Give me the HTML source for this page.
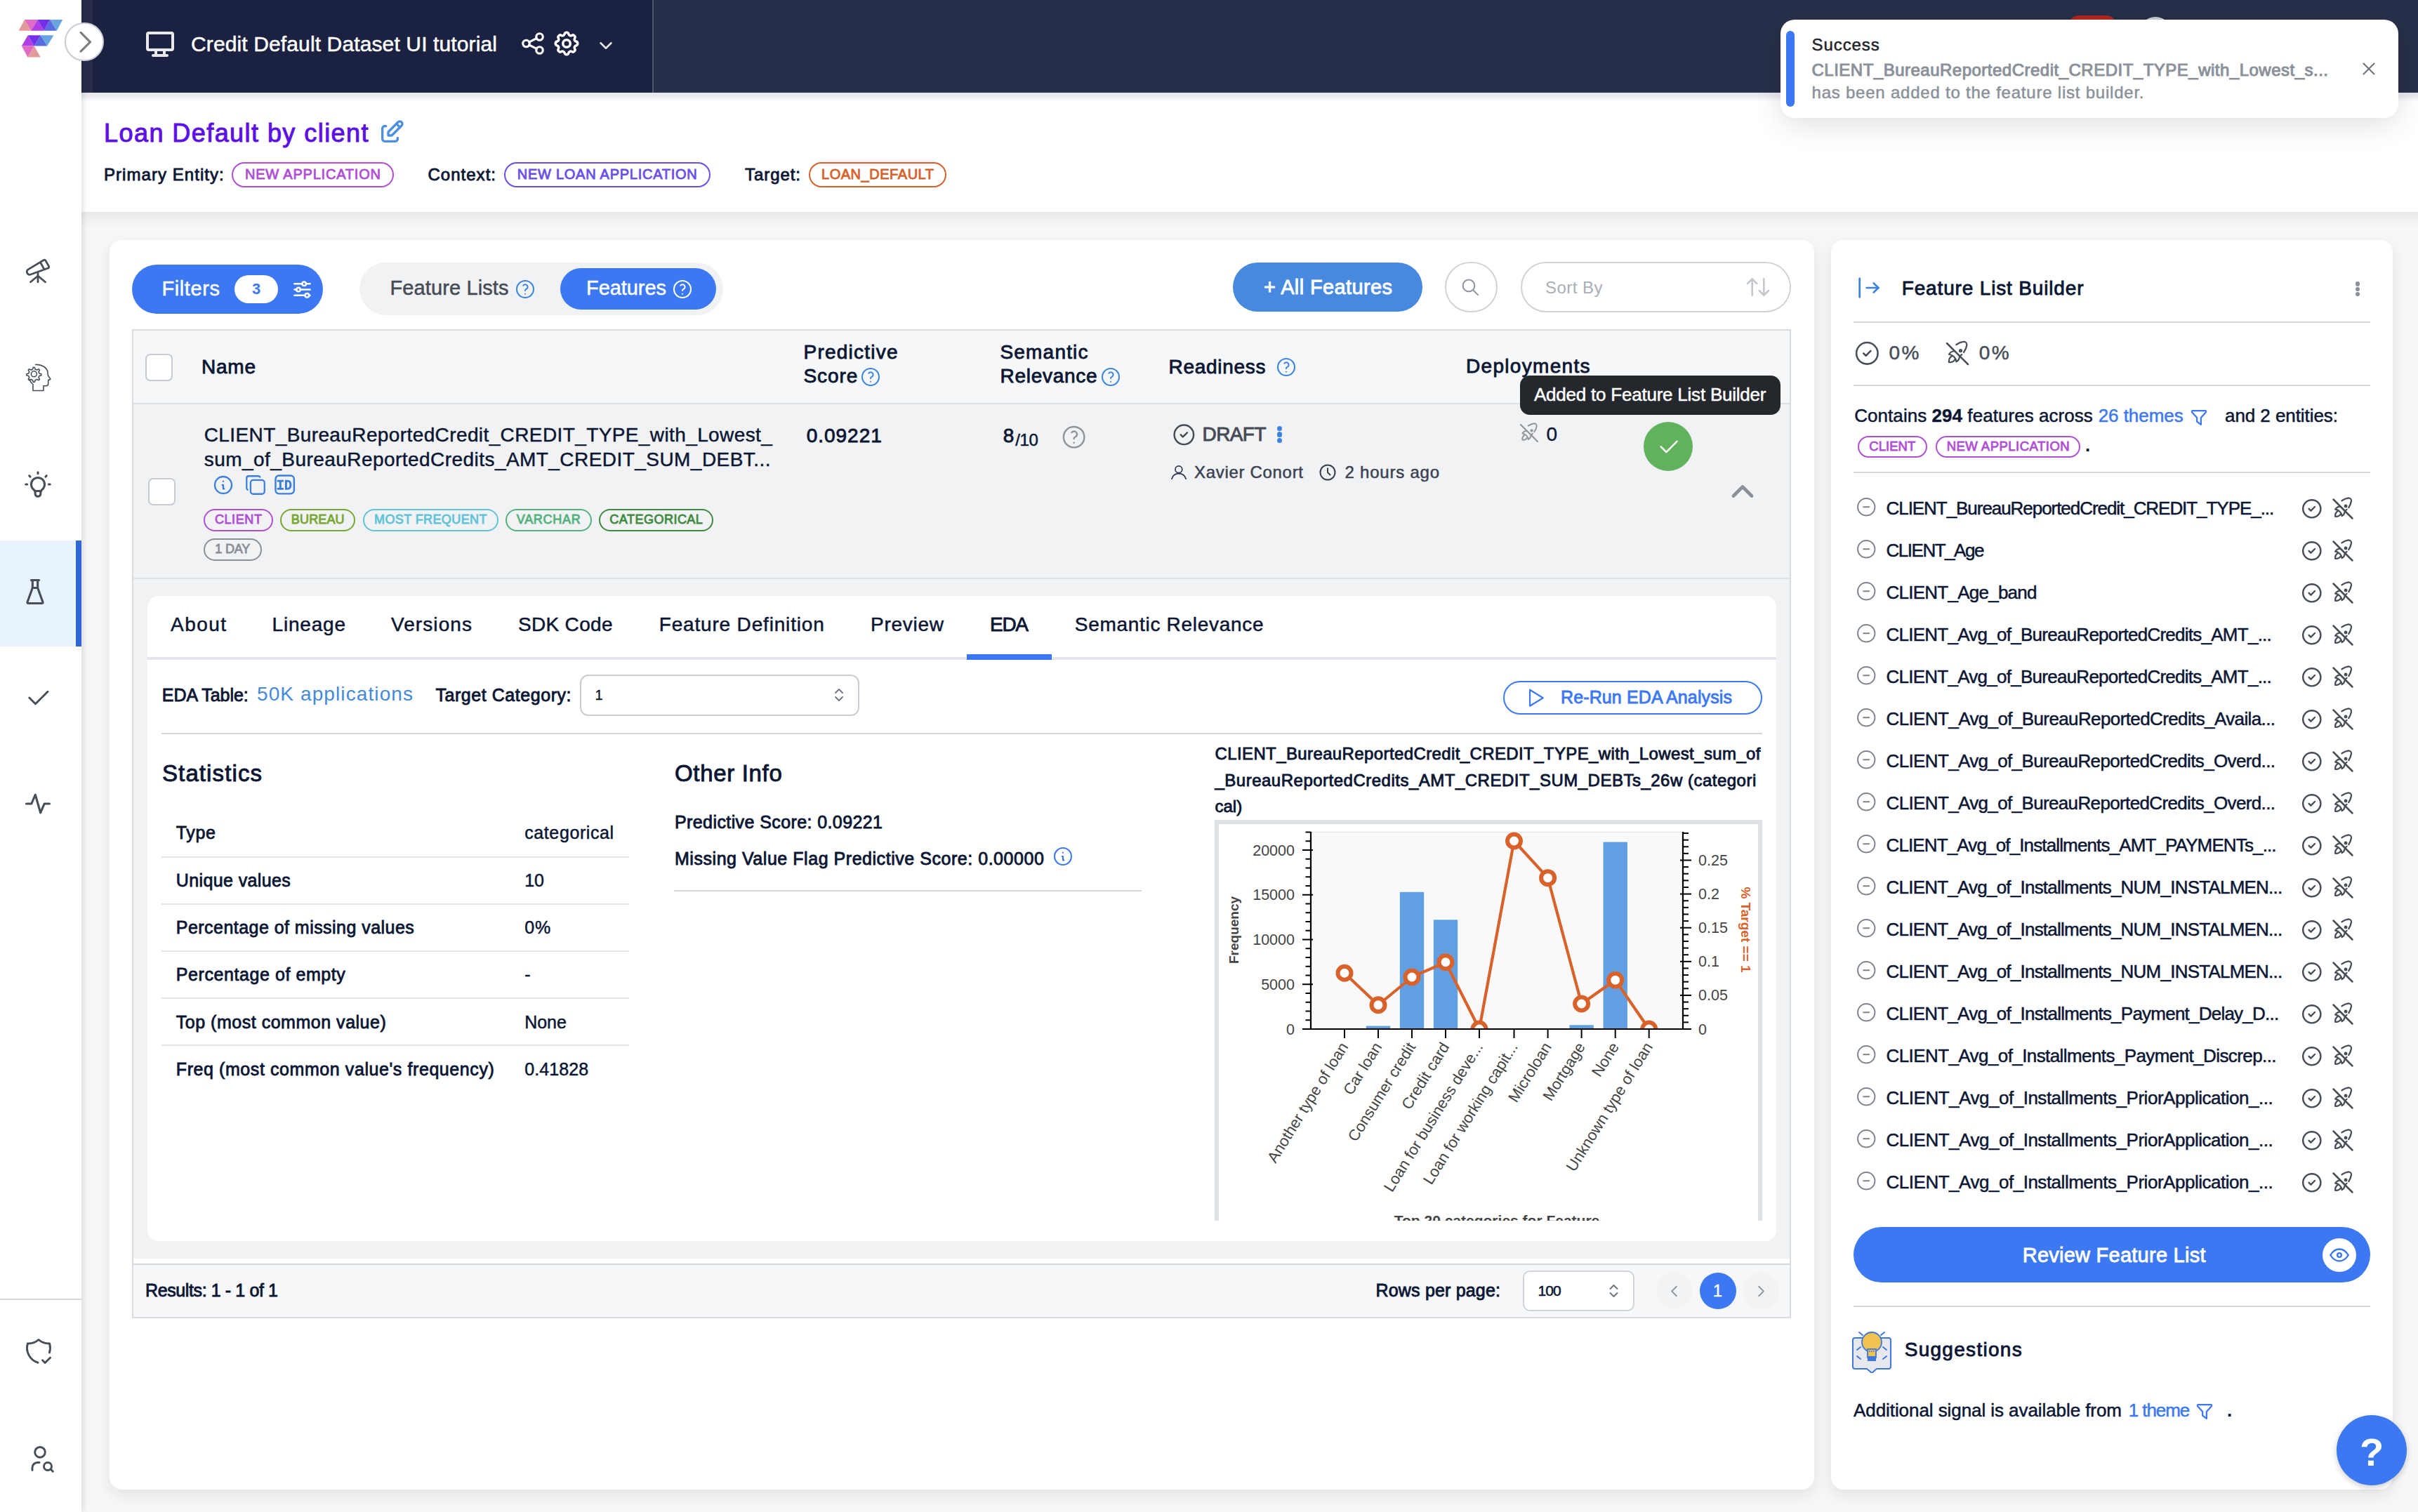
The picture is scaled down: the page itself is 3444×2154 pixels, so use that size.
<!DOCTYPE html><html><head><meta charset="utf-8"><style>
html,body{margin:0;padding:0;width:3444px;height:2154px;overflow:hidden;background:#f7f7f7;font-family:"Liberation Sans",sans-serif}
.t{position:absolute;white-space:nowrap;line-height:1}
.r{position:absolute;display:block}
.bd{box-sizing:border-box;text-align:center;font-weight:700;white-space:nowrap}
</style></head><body>
<div class="r" style="left:0px;top:0px;width:116px;height:2154px;background:#fff;z-index:5;box-shadow:2px 0 9px rgba(0,0,0,0.13)"></div>
<div class="r" style="left:116px;top:0px;width:3328px;height:132px;background:#282f4a"></div>
<div class="r" style="left:116px;top:0px;width:814px;height:132px;background:#1b2140"></div>
<div class="r" style="left:116px;top:0px;width:16px;height:132px;background:#272d48"></div>
<div class="r" style="left:929px;top:0px;width:2px;height:132px;background:#50566b"></div>
<svg class="r" style="left:0;top:0;z-index:6" width="100" height="90" viewBox="0 0 100 90">
<polygon points="26.5,43.8 35,28 44.1,43.8" fill="#e39a9a"/><polygon points="35,28 53.6,28 44.1,43.8" fill="#e06bc4"/><polygon points="44.1,43.8 53.6,28 62.6,43.8" fill="#b03fe3"/><polygon points="53.6,28 71.4,28 62.6,43.8" fill="#7430e6"/><polygon points="62.6,43.8 71.4,28 80.9,43.8" fill="#5a6ae0"/><polygon points="71.4,28 89.2,28 80.9,43.8" fill="#68a5e0"/>
<polygon points="30.9,65.6 39.7,50.3 48.7,65.6" fill="#b03fe3"/><polygon points="39.7,50.3 58,50.3 48.7,65.6" fill="#7430e6"/><polygon points="48.7,65.6 58,50.3 67.2,65.6" fill="#5a6ae0"/><polygon points="58,50.3 76.5,50.3 67.2,65.6" fill="#68a5e0"/>
<polygon points="30.9,65.6 48.7,65.6 39.4,81.6" fill="#e06bc4"/><polygon points="48.7,65.6 39.4,81.6 57.7,81.6" fill="#e39a9a"/>
</svg>
<div class="r" style="left:92.2px;top:31.9px;width:55.6px;height:55.6px;border-radius:50%;background:#fff;border:2px solid #c9ced5;z-index:7;box-sizing:border-box;box-shadow:0 1px 2px rgba(0,0,0,0.08)"></div>
<svg class="r" style="left:95.2px;top:33.099999999999994px;z-index:8" width="53.6" height="53.6" viewBox="0 0 24 24" fill="none" stroke="#7d7d7f" stroke-width="1.4" stroke-linecap="round" stroke-linejoin="round"><path d="M9 6l6 6l-6 6"/></svg>
<svg class="r" style="left:203.8px;top:38.8px;" width="48" height="48" viewBox="0 0 24 24" fill="none" stroke="#e9e9eb" stroke-width="2" stroke-linecap="round" stroke-linejoin="round"><path d="M3 5a1 1 0 0 1 1 -1h16a1 1 0 0 1 1 1v10a1 1 0 0 1 -1 1h-16a1 1 0 0 1 -1 -1v-10z"/><path d="M7 20h10"/><path d="M9 16v4"/><path d="M15 16v4"/></svg>
<div class="t " style="left:272px;top:47.60px;font-size:30px;font-weight:400;color:#ffffff;letter-spacing:0.125px;-webkit-text-stroke:0.5px currentColor;">Credit Default Dataset UI tutorial</div>
<svg class="r" style="left:740px;top:43px;" width="38" height="38" viewBox="0 0 24 24" fill="none" stroke="#ffffff" stroke-width="2" stroke-linecap="round" stroke-linejoin="round"><path d="M6 12m-3 0a3 3 0 1 0 6 0a3 3 0 1 0 -6 0"/><path d="M18 6m-3 0a3 3 0 1 0 6 0a3 3 0 1 0 -6 0"/><path d="M18 18m-3 0a3 3 0 1 0 6 0a3 3 0 1 0 -6 0"/><path d="M8.7 10.7l6.6 -3.4"/><path d="M8.7 13.3l6.6 3.4"/></svg>
<svg class="r" style="left:786px;top:41px;" width="42" height="42" viewBox="0 0 24 24" fill="none" stroke="#ffffff" stroke-width="2" stroke-linecap="round" stroke-linejoin="round"><path d="M10.325 4.317c.426 -1.756 2.924 -1.756 3.35 0a1.724 1.724 0 0 0 2.573 1.066c1.543 -.94 3.31 .826 2.37 2.37a1.724 1.724 0 0 0 1.065 2.572c1.756 .426 1.756 2.924 0 3.35a1.724 1.724 0 0 0 -1.066 2.573c.94 1.543 -.826 3.31 -2.37 2.37a1.724 1.724 0 0 0 -2.572 1.065c-.426 1.756 -2.924 1.756 -3.35 0a1.724 1.724 0 0 0 -2.573 -1.066c-1.543 .94 -3.31 -.826 -2.37 -2.37a1.724 1.724 0 0 0 -1.065 -2.572c-1.756 -.426 -1.756 -2.924 0 -3.35a1.724 1.724 0 0 0 1.066 -2.573c-.94 -1.543 .826 -3.31 2.37 -2.37c1 .608 2.296 .07 2.572 -1.065z"/><path d="M9 12a3 3 0 1 0 6 0a3 3 0 0 0 -6 0"/></svg>
<svg class="r" style="left:848px;top:50px;" width="30" height="30" viewBox="0 0 24 24" fill="none" stroke="#e6e8ec" stroke-width="2" stroke-linecap="round" stroke-linejoin="round"><path d="M6 9l6 6l6 -6"/></svg>
<div class="r" style="left:116px;top:132px;width:3328px;height:12px;background:linear-gradient(#e6e8ee,rgba(255,255,255,0));z-index:1"></div>
<div class="r" style="left:116px;top:132px;width:3328px;height:170px;background:#fff"></div>
<div class="r" style="left:116px;top:132px;width:3328px;height:12px;background:linear-gradient(#e4e6ec,rgba(255,255,255,0))"></div>
<div class="t " style="left:148px;top:171.52px;font-size:36px;font-weight:400;color:#5c10e6;letter-spacing:1.442px;-webkit-text-stroke:1px currentColor;">Loan Default by client</div>
<svg class="r" style="left:538px;top:168px;" width="40" height="40" viewBox="0 0 24 24" fill="none" stroke="#4a8fe0" stroke-width="2" stroke-linecap="round" stroke-linejoin="round"><path d="M7 7h-1a2 2 0 0 0 -2 2v9a2 2 0 0 0 2 2h9a2 2 0 0 0 2 -2v-1"/><path d="M20.385 6.585a2.1 2.1 0 0 0 -2.97 -2.97l-8.415 8.385v3h3l8.385 -8.415z"/><path d="M16 5l3 3"/></svg>
<div class="t " style="left:148px;top:236.68px;font-size:24px;font-weight:400;color:#0b1633;letter-spacing:1.051px;-webkit-text-stroke:0.85px currentColor;">Primary Entity:</div>
<div class="r bd" style="left:330px;top:231px;width:231px;height:36px;border:2.5px solid #b04fd6;border-radius:18.0px;color:#b04fd6;font-size:20px;line-height:31.0px;letter-spacing:0.794px;text-indent:0.794px;background:transparent;font-weight:400;-webkit-text-stroke:0.85px currentColor">NEW APPLICATION</div>
<div class="t " style="left:609.5px;top:236.68px;font-size:24px;font-weight:400;color:#0b1633;letter-spacing:1.016px;-webkit-text-stroke:0.85px currentColor;">Context:</div>
<div class="r bd" style="left:718px;top:231px;width:293.5px;height:36px;border:2.5px solid #6a4fe8;border-radius:18.0px;color:#6a4fe8;font-size:20px;line-height:31.0px;letter-spacing:0.742px;text-indent:0.742px;background:transparent;font-weight:400;-webkit-text-stroke:0.85px currentColor">NEW LOAN APPLICATION</div>
<div class="t " style="left:1061px;top:236.68px;font-size:24px;font-weight:400;color:#0b1633;letter-spacing:0.938px;-webkit-text-stroke:0.85px currentColor;">Target:</div>
<div class="r bd" style="left:1152px;top:231px;width:196px;height:36px;border:2.5px solid #d6612a;border-radius:18.0px;color:#d6612a;font-size:20px;line-height:31.0px;letter-spacing:0.534px;text-indent:0.534px;background:transparent;font-weight:400;-webkit-text-stroke:0.85px currentColor">LOAN_DEFAULT</div>
<div class="r" style="left:116px;top:302px;width:3328px;height:22px;background:linear-gradient(#e9e9e9,rgba(247,247,247,0))"></div>
<div class="r" style="left:155.8px;top:342px;width:2428.2px;height:1780px;background:#fff;border-radius:18px;box-shadow:0 8px 22px rgba(0,0,0,0.085)"></div>
<div class="r" style="left:2608px;top:342px;width:800px;height:1780px;background:#fff;border-radius:18px;box-shadow:0 8px 22px rgba(0,0,0,0.085)"></div>
<div class="r" style="left:188px;top:377px;width:272px;height:70px;border-radius:35.0px;box-sizing:border-box;background:#3b78f2"></div>
<div class="t " style="left:230.5px;top:397.45px;font-size:29px;font-weight:400;color:#fff;letter-spacing:0.591px;-webkit-text-stroke:0.5px currentColor;">Filters</div>
<div class="r" style="left:334px;top:392px;width:62px;height:40px;border-radius:20.0px;box-sizing:border-box;background:#fff"></div>
<div class="t " style="left:365px;transform:translateX(-50%);top:400.87px;font-size:22px;font-weight:700;color:#3b78f2;letter-spacing:0.000px;">3</div>
<svg class="r" style="left:413.5px;top:395.5px;" width="33" height="33" viewBox="0 0 24 24" fill="none" stroke="#fff" stroke-width="1.8" stroke-linecap="round" stroke-linejoin="round"><path d="M14 6m-2 0a2 2 0 1 0 4 0a2 2 0 1 0 -4 0"/><path d="M4 6l8 0"/><path d="M16 6l4 0"/><path d="M8 12m-2 0a2 2 0 1 0 4 0a2 2 0 1 0 -4 0"/><path d="M4 12l2 0"/><path d="M10 12l10 0"/><path d="M17 18m-2 0a2 2 0 1 0 4 0a2 2 0 1 0 -4 0"/><path d="M4 18l11 0"/><path d="M19 18l1 0"/></svg>
<div class="r" style="left:512px;top:374px;width:518px;height:75px;border-radius:37.5px;box-sizing:border-box;background:#f1f2f4"></div>
<div class="t " style="left:555.5px;top:396.45px;font-size:29px;font-weight:400;color:#454b54;letter-spacing:0.113px;-webkit-text-stroke:0.5px currentColor;">Feature Lists</div>
<svg class="r" style="left:732.0px;top:396.0px;" width="32" height="32" viewBox="0 0 24 24" fill="none" stroke="#3d86e0" stroke-width="1.55" stroke-linecap="round" stroke-linejoin="round"><path d="M12 12m-9 0a9 9 0 1 0 18 0a9 9 0 1 0 -18 0"/><path d="M12 17l0 .01"/><path d="M12 13.5a1.5 1.5 0 0 1 1 -1.5a2.6 2.6 0 1 0 -3 -4"/></svg>
<div class="r" style="left:798px;top:382px;width:222px;height:59px;border-radius:29.5px;box-sizing:border-box;background:#3b78f2"></div>
<div class="t " style="left:835px;top:396.45px;font-size:29px;font-weight:400;color:#fff;letter-spacing:-0.065px;-webkit-text-stroke:0.5px currentColor;">Features</div>
<svg class="r" style="left:956.0px;top:396.0px;" width="32" height="32" viewBox="0 0 24 24" fill="none" stroke="#fff" stroke-width="1.55" stroke-linecap="round" stroke-linejoin="round"><path d="M12 12m-9 0a9 9 0 1 0 18 0a9 9 0 1 0 -18 0"/><path d="M12 17l0 .01"/><path d="M12 13.5a1.5 1.5 0 0 1 1 -1.5a2.6 2.6 0 1 0 -3 -4"/></svg>
<div class="r" style="left:1756px;top:374px;width:270px;height:70px;border-radius:35.0px;box-sizing:border-box;background:#4789de"></div>
<div class="t " style="left:1800px;top:394.95px;font-size:29px;font-weight:400;color:#fff;letter-spacing:0.375px;-webkit-text-stroke:0.85px currentColor;">+ All Features</div>
<div class="r" style="left:2058px;top:373px;width:75px;height:72px;border-radius:36.0px;box-sizing:border-box;border:2px solid #cfd4da;background:#fff"></div>
<svg class="r" style="left:2079.65px;top:394.65px;" width="28.7" height="28.7" viewBox="0 0 24 24" fill="none" stroke="#8f959c" stroke-width="1.7" stroke-linecap="round" stroke-linejoin="round"><path d="M10 10m-7 0a7 7 0 1 0 14 0a7 7 0 1 0 -14 0"/><path d="M21 21l-6 -6"/></svg>
<div class="r" style="left:2166px;top:373px;width:385px;height:72px;border-radius:36.0px;box-sizing:border-box;border:2px solid #cfd4da;background:#fff"></div>
<div class="t " style="left:2201px;top:397.68px;font-size:24px;font-weight:400;color:#a9afb6;letter-spacing:0.466px;">Sort By</div>
<svg class="r" style="left:2483.75px;top:388.7px;" width="40" height="40" viewBox="0 0 24 24" fill="none" stroke="#c2c7cd" stroke-width="1.5" stroke-linecap="round" stroke-linejoin="round"><path d="M3 9l4 -4l4 4m-4 -4v14"/><path d="M21 15l-4 4l-4 -4m4 4v-14"/></svg>
<div class="r" style="left:188px;top:469px;width:2363px;height:1409px;box-sizing:border-box;border:2px solid #d8dce1;background:#f1f2f4"></div>
<div class="r" style="left:190px;top:471px;width:2359px;height:104px;background:#f6f7f9"></div>
<div class="r" style="left:190px;top:574px;width:2359px;height:2px;background:#dde0e5"></div>
<div class="r" style="left:190px;top:823px;width:2359px;height:2px;background:#dde0e5"></div>
<div class="r" style="left:190px;top:1793px;width:2359px;height:7px;background:#fff"></div>
<div class="r" style="left:190px;top:1800px;width:2359px;height:2px;background:#d3d7dd"></div>
<div class="r" style="left:190px;top:1802px;width:2359px;height:74px;background:#f6f7f9"></div>
<div class="r" style="left:206.5px;top:504px;width:39px;height:38.5px;border-radius:7px;box-sizing:border-box;border:2px solid #c6cbd2;background:#fff"></div>
<div class="t " style="left:287px;top:509.29px;font-size:28px;font-weight:400;color:#0b1633;letter-spacing:0.766px;-webkit-text-stroke:0.85px currentColor;">Name</div>
<div class="t " style="left:1144.5px;top:487.54px;font-size:28px;font-weight:400;color:#0b1633;letter-spacing:1.229px;-webkit-text-stroke:0.85px currentColor;">Predictive</div>
<div class="t " style="left:1144.5px;top:522.04px;font-size:28px;font-weight:400;color:#0b1633;letter-spacing:0.898px;-webkit-text-stroke:0.85px currentColor;">Score</div>
<svg class="r" style="left:1224.0px;top:521.0px;" width="32" height="32" viewBox="0 0 24 24" fill="none" stroke="#3d86e0" stroke-width="1.55" stroke-linecap="round" stroke-linejoin="round"><path d="M12 12m-9 0a9 9 0 1 0 18 0a9 9 0 1 0 -18 0"/><path d="M12 17l0 .01"/><path d="M12 13.5a1.5 1.5 0 0 1 1 -1.5a2.6 2.6 0 1 0 -3 -4"/></svg>
<div class="t " style="left:1424.5px;top:487.54px;font-size:28px;font-weight:400;color:#0b1633;letter-spacing:1.183px;-webkit-text-stroke:0.85px currentColor;">Semantic</div>
<div class="t " style="left:1424.5px;top:522.04px;font-size:28px;font-weight:400;color:#0b1633;letter-spacing:0.711px;-webkit-text-stroke:0.85px currentColor;">Relevance</div>
<svg class="r" style="left:1566.0px;top:521.0px;" width="32" height="32" viewBox="0 0 24 24" fill="none" stroke="#3d86e0" stroke-width="1.55" stroke-linecap="round" stroke-linejoin="round"><path d="M12 12m-9 0a9 9 0 1 0 18 0a9 9 0 1 0 -18 0"/><path d="M12 17l0 .01"/><path d="M12 13.5a1.5 1.5 0 0 1 1 -1.5a2.6 2.6 0 1 0 -3 -4"/></svg>
<div class="t " style="left:1664.5px;top:508.79px;font-size:28px;font-weight:400;color:#0b1633;letter-spacing:0.711px;-webkit-text-stroke:0.85px currentColor;">Readiness</div>
<svg class="r" style="left:1816.0px;top:506.5px;" width="32" height="32" viewBox="0 0 24 24" fill="none" stroke="#3d86e0" stroke-width="1.55" stroke-linecap="round" stroke-linejoin="round"><path d="M12 12m-9 0a9 9 0 1 0 18 0a9 9 0 1 0 -18 0"/><path d="M12 17l0 .01"/><path d="M12 13.5a1.5 1.5 0 0 1 1 -1.5a2.6 2.6 0 1 0 -3 -4"/></svg>
<div class="t " style="left:2088px;top:508.29px;font-size:28px;font-weight:400;color:#0b1633;letter-spacing:1.309px;-webkit-text-stroke:0.85px currentColor;">Deployments</div>
<div class="r" style="left:210.5px;top:680.5px;width:39px;height:39px;border-radius:7px;box-sizing:border-box;border:2px solid #c6cbd2;background:#fff"></div>
<div class="t " style="left:290.75px;top:605.54px;font-size:28px;font-weight:400;color:#0b1633;letter-spacing:0.392px;-webkit-text-stroke:0.45px currentColor;">CLIENT_BureauReportedCredit_CREDIT_TYPE_with_Lowest_</div>
<div class="t " style="left:290.75px;top:641.29px;font-size:28px;font-weight:400;color:#0b1633;letter-spacing:0.449px;-webkit-text-stroke:0.45px currentColor;">sum_of_BureauReportedCredits_AMT_CREDIT_SUM_DEBT...</div>
<svg class="r" style="left:302.0px;top:675.0px;" width="32" height="32" viewBox="0 0 24 24" fill="none" stroke="#3a7fdc" stroke-width="1.75" stroke-linecap="round" stroke-linejoin="round"><path d="M3 12a9 9 0 1 0 18 0a9 9 0 0 0 -18 0"/><path d="M12 8h.01"/><path d="M11 12h1v4h1"/></svg>
<svg class="r" style="left:347px;top:674px;" width="34" height="34" viewBox="0 0 24 24" fill="none" stroke="#3a7fdc" stroke-width="1.6" stroke-linecap="round" stroke-linejoin="round"><path d="M7 7m0 2.667a2.667 2.667 0 0 1 2.667 -2.667h8.666a2.667 2.667 0 0 1 2.667 2.667v8.666a2.667 2.667 0 0 1 -2.667 2.667h-8.666a2.667 2.667 0 0 1 -2.667 -2.667z"/><path d="M4.012 16.737a2.005 2.005 0 0 1 -1.012 -1.737v-10c0 -1.1 .9 -2 2 -2h10c.75 0 1.158 .385 1.5 1"/></svg>
<svg class="r" style="left:388px;top:673px" width="36" height="35" viewBox="388 673 36 35"><rect x="392.45" y="677.45" width="26.4" height="25.9" rx="5" fill="none" stroke="#3a7fdc" stroke-width="2.4"/><path fill="#3a7fdc" d="M394.7 683.7h9.2v2.8h-3.1v8.4h3.1v2.8h-9.2v-2.8h3.1v-8.4h-3.1z"/><path fill="#3a7fdc" fill-rule="evenodd" d="M405.9 683.7h3.6c3.6 0 5.9 2.8 5.9 7s-2.3 7 -5.9 7h-3.6z M408.9 686.5v8.4h0.6c1.8 0 2.9 -1.6 2.9 -4.2s-1.1 -4.2 -2.9 -4.2z"/></svg>
<div class="r bd" style="left:290px;top:725px;width:98.75px;height:32px;border:2.5px solid #b04fd6;border-radius:16.0px;color:#b04fd6;font-size:18px;line-height:27.0px;letter-spacing:0.597px;text-indent:0.597px;background:transparent;font-weight:400;-webkit-text-stroke:0.85px currentColor">CLIENT</div>
<div class="r bd" style="left:399.25px;top:725px;width:107px;height:32px;border:2.5px solid #76a830;border-radius:16.0px;color:#76a830;font-size:18px;line-height:27.0px;letter-spacing:0.147px;text-indent:0.147px;background:transparent;font-weight:400;-webkit-text-stroke:0.85px currentColor">BUREAU</div>
<div class="r bd" style="left:517px;top:725px;width:192.5px;height:32px;border:2.5px solid #5fc3d9;border-radius:16.0px;color:#5fc3d9;font-size:18px;line-height:27.0px;letter-spacing:0.402px;text-indent:0.402px;background:transparent;font-weight:400;-webkit-text-stroke:0.85px currentColor">MOST FREQUENT</div>
<div class="r bd" style="left:720px;top:725px;width:122.5px;height:32px;border:2.5px solid #52b27e;border-radius:16.0px;color:#52b27e;font-size:18px;line-height:27.0px;letter-spacing:0.719px;text-indent:0.719px;background:transparent;font-weight:400;-webkit-text-stroke:0.85px currentColor">VARCHAR</div>
<div class="r bd" style="left:853.25px;top:725px;width:162.75px;height:32px;border:2.5px solid #3f8a3f;border-radius:16.0px;color:#3f8a3f;font-size:18px;line-height:27.0px;letter-spacing:0.481px;text-indent:0.481px;background:transparent;font-weight:400;-webkit-text-stroke:0.85px currentColor">CATEGORICAL</div>
<div class="r bd" style="left:290px;top:767px;width:82.5px;height:31.75px;border:2.5px solid #8a9097;border-radius:15.875px;color:#8a9097;font-size:18px;line-height:26.75px;letter-spacing:-0.172px;text-indent:-0.172px;background:transparent;font-weight:400;-webkit-text-stroke:0.85px currentColor">1 DAY</div>
<div class="t " style="left:1148.75px;top:607.29px;font-size:28px;font-weight:400;color:#0b1633;letter-spacing:0.964px;-webkit-text-stroke:0.85px currentColor;">0.09221</div>
<div class="t " style="left:1428.75px;top:607.29px;font-size:28px;font-weight:400;color:#0b1633;letter-spacing:0.000px;-webkit-text-stroke:0.85px currentColor;">8</div>
<div class="t " style="left:1446.25px;top:614.68px;font-size:24px;font-weight:400;color:#0b1633;letter-spacing:-0.438px;-webkit-text-stroke:0.5px currentColor;">/10</div>
<svg class="r" style="left:1510.35px;top:602.85px;" width="39.3" height="39.3" viewBox="0 0 24 24" fill="none" stroke="#8f959c" stroke-width="1.5" stroke-linecap="round" stroke-linejoin="round"><path d="M12 12m-9 0a9 9 0 1 0 18 0a9 9 0 1 0 -18 0"/><path d="M12 17l0 .01"/><path d="M12 13.5a1.5 1.5 0 0 1 1 -1.5a2.6 2.6 0 1 0 -3 -4"/></svg>
<svg class="r" style="left:1667.65px;top:600.65px;" width="36.7" height="36.7" viewBox="0 0 24 24" fill="none" stroke="#454b54" stroke-width="1.6" stroke-linecap="round" stroke-linejoin="round"><path d="M12 12m-9 0a9 9 0 1 0 18 0a9 9 0 1 0 -18 0"/><path d="M9 12l2 2l4 -4"/></svg>
<div class="t " style="left:1712.5px;top:605.29px;font-size:28px;font-weight:400;color:#454b54;letter-spacing:-0.582px;-webkit-text-stroke:0.85px currentColor;">DRAFT</div>
<div class="r" style="left:1818.9px;top:607.0px;width:7.2px;height:7.2px;border-radius:50%;background:#3b82e0"></div>
<div class="r" style="left:1818.9px;top:615.4px;width:7.2px;height:7.2px;border-radius:50%;background:#3b82e0"></div>
<div class="r" style="left:1818.9px;top:623.8px;width:7.2px;height:7.2px;border-radius:50%;background:#3b82e0"></div>
<svg class="r" style="left:1664px;top:660px" width="30" height="26" viewBox="1664 660 30 26" fill="none" stroke="#2e3650" stroke-width="1.7" stroke-linecap="round"><circle cx="1678.9" cy="668.7" r="4.9"/><path d="M1668.9 682.2 C1670.5 677 1674 674.6 1679 674.6 C1684 674.6 1687.5 677 1689.2 682.2"/></svg>
<div class="t " style="left:1701px;top:660.68px;font-size:24px;font-weight:400;color:#3a4252;letter-spacing:0.689px;-webkit-text-stroke:0.5px currentColor;">Xavier Conort</div>
<svg class="r" style="left:1877.0px;top:659.0px;" width="28" height="28" viewBox="0 0 24 24" fill="none" stroke="#3a4252" stroke-width="1.75" stroke-linecap="round" stroke-linejoin="round"><path d="M3 12a9 9 0 1 0 18 0a9 9 0 0 0 -18 0"/><path d="M12 7v5l3 3"/></svg>
<div class="t " style="left:1915.5px;top:660.68px;font-size:24px;font-weight:400;color:#3a4252;letter-spacing:0.773px;-webkit-text-stroke:0.5px currentColor;">2 hours ago</div>
<svg class="r" style="left:2162.0px;top:601.0px;" width="32" height="32" viewBox="0 0 24 24" fill="none" stroke="#8f959c" stroke-width="1.6" stroke-linecap="round" stroke-linejoin="round"><g transform="translate(12 12) scale(0.9) translate(-12 -12)"><path d="M9.29 9.275a9.03 9.03 0 0 0 -.29 .225a6 6 0 0 0 -5 3a8 8 0 0 1 7 7a6 6 0 0 0 3 -5c.79 -.59 1.5 -1.21 2.13 -1.87m1.95 -2.05a17.001 17.001 0 0 0 2.85 -7.085a3 3 0 0 0 -3 -3a17 17 0 0 0 -7.02 2.83"/><path d="M7 14a6 6 0 0 0 -3 6a6 6 0 0 0 6 -3"/><path d="M15 9m-1 0a1 1 0 1 0 2 0a1 1 0 1 0 -2 0"/></g><path d="M3 3l18 18"/></svg>
<div class="t " style="left:2202.5px;top:605.04px;font-size:28px;font-weight:400;color:#0b1633;letter-spacing:0.000px;-webkit-text-stroke:0.35px currentColor;">0</div>
<div class="r" style="left:2341px;top:601px;width:70px;height:70px;border-radius:50%;background:#62b25d"></div>
<svg class="r" style="left:2358.1px;top:617.6px;" width="36.8" height="36.8" viewBox="0 0 24 24" fill="none" stroke="#fff" stroke-width="1.6" stroke-linecap="round" stroke-linejoin="round"><path d="M5 12l5 5l10 -10"/></svg>
<svg class="r" style="left:2456.0px;top:674.0px;" width="52" height="52" viewBox="0 0 24 24" fill="none" stroke="#8a9097" stroke-width="2.2" stroke-linecap="round" stroke-linejoin="round"><path d="M6 15l6 -6l6 6"/></svg>
<div class="r" style="left:2165px;top:534.5px;width:371px;height:56px;border-radius:14px;background:#24272c;z-index:3"></div>
<div class="t " style="left:2185px;top:548.99px;font-size:26px;font-weight:400;color:#fff;letter-spacing:-0.224px;-webkit-text-stroke:0.5px currentColor;z-index:4">Added to Feature List Builder</div>
<div class="t " style="left:207px;top:1825.83px;font-size:25px;font-weight:400;color:#0b1633;letter-spacing:-0.385px;-webkit-text-stroke:0.85px currentColor;">Results: 1 - 1 of 1</div>
<div class="t " style="left:1959.5px;top:1825.83px;font-size:25px;font-weight:400;color:#0b1633;letter-spacing:0.184px;-webkit-text-stroke:0.85px currentColor;">Rows per page:</div>
<div class="r" style="left:2168.75px;top:1809.5px;width:158.75px;height:58.5px;border-radius:10px;box-sizing:border-box;border:2px solid #cfd4da;background:#fff"></div>
<div class="t " style="left:2190.5px;top:1828.47px;font-size:21px;font-weight:400;color:#0b1633;letter-spacing:-0.898px;-webkit-text-stroke:0.5px currentColor;">100</div>
<svg class="r" style="left:2291px;top:1829px" width="15" height="20" viewBox="0 0 15 20" fill="none" stroke="#6b7280" stroke-width="2" stroke-linecap="round" stroke-linejoin="round"><path d="M2.5 7l5 -5l5 5"/><path d="M2.5 13l5 5l5 -5"/></svg>
<div class="r" style="left:2358.75px;top:1813px;width:51.5px;height:51.5px;border-radius:50%;background:#f2f3f5"></div>
<svg class="r" style="left:2371.0px;top:1825.5px;" width="27" height="27" viewBox="0 0 24 24" fill="none" stroke="#8f959c" stroke-width="1.6" stroke-linecap="round" stroke-linejoin="round"><path d="M15 6l-6 6l6 6"/></svg>
<div class="r" style="left:2420.5px;top:1813px;width:52px;height:52px;border-radius:50%;background:#3b78f2"></div>
<div class="t " style="left:2446.5px;transform:translateX(-50%);top:1826.68px;font-size:24px;font-weight:400;color:#fff;letter-spacing:0.000px;-webkit-text-stroke:0.35px currentColor;">1</div>
<div class="r" style="left:2482.5px;top:1813px;width:51.5px;height:51.5px;border-radius:50%;background:#f2f3f5"></div>
<svg class="r" style="left:2494.5px;top:1825.5px;" width="27" height="27" viewBox="0 0 24 24" fill="none" stroke="#8f959c" stroke-width="1.6" stroke-linecap="round" stroke-linejoin="round"><path d="M9 6l6 6l-6 6"/></svg>
<div class="r" style="left:210px;top:849px;width:2320px;height:919px;border-radius:16px;background:#fff"></div>
<div class="t " style="left:243px;top:876.29px;font-size:28px;font-weight:400;color:#0b1633;letter-spacing:1.457px;-webkit-text-stroke:0.5px currentColor;">About</div>
<div class="t " style="left:387.5px;top:876.29px;font-size:28px;font-weight:400;color:#0b1633;letter-spacing:0.807px;-webkit-text-stroke:0.5px currentColor;">Lineage</div>
<div class="t " style="left:557px;top:876.29px;font-size:28px;font-weight:400;color:#0b1633;letter-spacing:1.085px;-webkit-text-stroke:0.5px currentColor;">Versions</div>
<div class="t " style="left:738px;top:876.29px;font-size:28px;font-weight:400;color:#0b1633;letter-spacing:0.315px;-webkit-text-stroke:0.5px currentColor;">SDK Code</div>
<div class="t " style="left:938.75px;top:876.29px;font-size:28px;font-weight:400;color:#0b1633;letter-spacing:0.823px;-webkit-text-stroke:0.5px currentColor;">Feature Definition</div>
<div class="t " style="left:1240px;top:876.29px;font-size:28px;font-weight:400;color:#0b1633;letter-spacing:0.734px;-webkit-text-stroke:0.5px currentColor;">Preview</div>
<div class="t " style="left:1530.75px;top:876.29px;font-size:28px;font-weight:400;color:#0b1633;letter-spacing:0.702px;-webkit-text-stroke:0.5px currentColor;">Semantic Relevance</div>
<div class="t " style="left:1410px;top:876.29px;font-size:28px;font-weight:400;color:#0b1633;letter-spacing:-1.289px;-webkit-text-stroke:0.85px currentColor;">EDA</div>
<div class="r" style="left:210px;top:936px;width:2320px;height:4px;background:#e3e6ea"></div>
<div class="r" style="left:1377px;top:932px;width:121px;height:8px;background:#3b78f2"></div>
<div class="t " style="left:230.75px;top:977.58px;font-size:25px;font-weight:400;color:#0b1633;letter-spacing:-0.026px;-webkit-text-stroke:0.85px currentColor;">EDA Table:</div>
<div class="t " style="left:366px;top:975.04px;font-size:28px;font-weight:400;color:#4389dc;letter-spacing:1.101px;">50K applications</div>
<div class="t " style="left:620.5px;top:977.58px;font-size:25px;font-weight:400;color:#0b1633;letter-spacing:0.545px;-webkit-text-stroke:0.85px currentColor;">Target Category:</div>
<div class="r" style="left:825.75px;top:960.5px;width:398.5px;height:59px;border-radius:12px;box-sizing:border-box;border:2px solid #c9cdd3;background:#fff"></div>
<div class="t " style="left:847.5px;top:980.07px;font-size:20px;font-weight:400;color:#0b1633;letter-spacing:0.000px;-webkit-text-stroke:0.35px currentColor;">1</div>
<svg class="r" style="left:1187px;top:980px" width="16" height="20" viewBox="0 0 16 20" fill="none" stroke="#6b7280" stroke-width="1.8" stroke-linecap="round" stroke-linejoin="round"><path d="M3 7l5 -5l5 5"/><path d="M3 13l5 5l5 -5"/></svg>
<div class="r" style="left:2141.25px;top:970px;width:368.25px;height:47.5px;border-radius:24px;box-sizing:border-box;border:2.2px solid #3b78f2"></div>
<svg class="r" style="left:2168.7px;top:976.75px;" width="34.5" height="34.5" viewBox="0 0 24 24" fill="none" stroke="#3b78f2" stroke-width="1.5" stroke-linecap="round" stroke-linejoin="round"><path d="M7 4v16l13 -8z"/></svg>
<div class="t " style="left:2223px;top:980.83px;font-size:25px;font-weight:400;color:#3b78f2;letter-spacing:0.123px;-webkit-text-stroke:0.85px currentColor;">Re-Run EDA Analysis</div>
<div class="r" style="left:230px;top:1044px;width:2280px;height:2px;background:#d5d9de"></div>
<div class="t " style="left:231px;top:1085.06px;font-size:33px;font-weight:400;color:#0b1633;letter-spacing:1.106px;-webkit-text-stroke:0.9px currentColor;">Statistics</div>
<div class="t " style="left:250.8px;top:1174.23px;font-size:25px;font-weight:400;color:#0b1633;letter-spacing:0.599px;-webkit-text-stroke:0.8px currentColor;">Type</div>
<div class="t " style="left:747.2px;top:1174.23px;font-size:25px;font-weight:400;color:#0b1633;letter-spacing:0.609px;-webkit-text-stroke:0.5px currentColor;">categorical</div>
<div class="r" style="left:229.8px;top:1219.7px;width:666px;height:2px;background:#e1e4e8"></div>
<div class="t " style="left:250.8px;top:1241.63px;font-size:25px;font-weight:400;color:#0b1633;letter-spacing:0.380px;-webkit-text-stroke:0.8px currentColor;">Unique values</div>
<div class="t " style="left:747.2px;top:1241.63px;font-size:25px;font-weight:400;color:#0b1633;letter-spacing:0.000px;-webkit-text-stroke:0.5px currentColor;">10</div>
<div class="r" style="left:229.8px;top:1286.75px;width:666px;height:2px;background:#e1e4e8"></div>
<div class="t " style="left:250.8px;top:1309.03px;font-size:25px;font-weight:400;color:#0b1633;letter-spacing:0.461px;-webkit-text-stroke:0.8px currentColor;">Percentage of missing values</div>
<div class="t " style="left:747.2px;top:1309.03px;font-size:25px;font-weight:400;color:#0b1633;letter-spacing:0.859px;-webkit-text-stroke:0.5px currentColor;">0%</div>
<div class="r" style="left:229.8px;top:1353.8px;width:666px;height:2px;background:#e1e4e8"></div>
<div class="t " style="left:250.8px;top:1376.43px;font-size:25px;font-weight:400;color:#0b1633;letter-spacing:0.572px;-webkit-text-stroke:0.8px currentColor;">Percentage of empty</div>
<div class="t " style="left:747.2px;top:1376.43px;font-size:25px;font-weight:400;color:#0b1633;letter-spacing:0.000px;-webkit-text-stroke:0.5px currentColor;">-</div>
<div class="r" style="left:229.8px;top:1420.85px;width:666px;height:2px;background:#e1e4e8"></div>
<div class="t " style="left:250.8px;top:1443.83px;font-size:25px;font-weight:400;color:#0b1633;letter-spacing:0.518px;-webkit-text-stroke:0.8px currentColor;">Top (most common value)</div>
<div class="t " style="left:747.2px;top:1443.83px;font-size:25px;font-weight:400;color:#0b1633;letter-spacing:-0.022px;-webkit-text-stroke:0.5px currentColor;">None</div>
<div class="r" style="left:229.8px;top:1487.9px;width:666px;height:2px;background:#e1e4e8"></div>
<div class="t " style="left:250.8px;top:1511.23px;font-size:25px;font-weight:400;color:#0b1633;letter-spacing:0.580px;-webkit-text-stroke:0.8px currentColor;">Freq (most common value's frequency)</div>
<div class="t " style="left:747.2px;top:1511.23px;font-size:25px;font-weight:400;color:#0b1633;letter-spacing:0.104px;-webkit-text-stroke:0.5px currentColor;">0.41828</div>
<div class="t " style="left:961px;top:1085.06px;font-size:33px;font-weight:400;color:#0b1633;letter-spacing:0.672px;-webkit-text-stroke:0.9px currentColor;">Other Info</div>
<div class="t " style="left:961px;top:1158.83px;font-size:25px;font-weight:400;color:#0b1633;letter-spacing:0.405px;-webkit-text-stroke:0.85px currentColor;">Predictive Score: 0.09221</div>
<div class="t " style="left:961px;top:1210.63px;font-size:25px;font-weight:400;color:#0b1633;letter-spacing:0.540px;-webkit-text-stroke:0.85px currentColor;">Missing Value Flag Predictive Score: 0.00000</div>
<svg class="r" style="left:1497.6px;top:1204.0px;" width="32" height="32" viewBox="0 0 24 24" fill="none" stroke="#3b78f2" stroke-width="1.6" stroke-linecap="round" stroke-linejoin="round"><path d="M3 12a9 9 0 1 0 18 0a9 9 0 0 0 -18 0"/><path d="M12 8h.01"/><path d="M11 12h1v4h1"/></svg>
<div class="r" style="left:960px;top:1267.75px;width:666px;height:2px;background:#d5d9de"></div>
<div class="t " style="left:1730.5px;top:1062.18px;font-size:24px;font-weight:400;color:#0b1633;letter-spacing:0.386px;-webkit-text-stroke:0.85px currentColor;">CLIENT_BureauReportedCredit_CREDIT_TYPE_with_Lowest_sum_of</div>
<div class="t " style="left:1730.5px;top:1099.68px;font-size:24px;font-weight:400;color:#0b1633;letter-spacing:0.496px;-webkit-text-stroke:0.85px currentColor;">_BureauReportedCredits_AMT_CREDIT_SUM_DEBTs_26w (categori</div>
<div class="t " style="left:1730.5px;top:1137.18px;font-size:24px;font-weight:400;color:#0b1633;letter-spacing:0.000px;-webkit-text-stroke:0.85px currentColor;">cal)</div>
<svg class="r" style="left:1730px;top:1168px" width="780" height="571" viewBox="1730 1168 780 571" font-family="Liberation Sans, sans-serif"><rect x="1730" y="1168" width="780" height="571" fill="#dee1e5"/><rect x="1736" y="1174" width="768" height="600" fill="#fff"/><rect x="1867" y="1185" width="530" height="281" fill="#f9f9f9"/><line x1="1867" y1="1185.5" x2="2397" y2="1185.5" stroke="#e6e6e6" stroke-width="1.5"/><rect x="1945" y="1460.75" width="36" height="5.25" fill="#62a0e3" stroke="#fff" stroke-width="1.5"/><rect x="1993" y="1270" width="36" height="196" fill="#62a0e3" stroke="#fff" stroke-width="1.5"/><rect x="2041" y="1309.5" width="36" height="156.5" fill="#62a0e3" stroke="#fff" stroke-width="1.5"/><rect x="2186.6" y="1464.5" width="36" height="1.5" fill="#62a0e3" stroke="#fff" stroke-width="1.5"/><rect x="2234.6" y="1459.5" width="36" height="6.5" fill="#62a0e3" stroke="#fff" stroke-width="1.5"/><rect x="2282.7" y="1198.75" width="36" height="267.25" fill="#62a0e3" stroke="#fff" stroke-width="1.5"/><line x1="1867" y1="1185" x2="1867" y2="1467" stroke="#000" stroke-width="2.2"/><line x1="1855" y1="1466.0" x2="1870" y2="1466.0" stroke="#000" stroke-width="2"/><line x1="1859.5" y1="1453.25" x2="1867" y2="1453.25" stroke="#000" stroke-width="2"/><line x1="1859.5" y1="1440.5" x2="1867" y2="1440.5" stroke="#000" stroke-width="2"/><line x1="1859.5" y1="1427.75" x2="1867" y2="1427.75" stroke="#000" stroke-width="2"/><line x1="1859.5" y1="1415.0" x2="1867" y2="1415.0" stroke="#000" stroke-width="2"/><line x1="1855" y1="1402.25" x2="1870" y2="1402.25" stroke="#000" stroke-width="2"/><line x1="1859.5" y1="1389.5" x2="1867" y2="1389.5" stroke="#000" stroke-width="2"/><line x1="1859.5" y1="1376.75" x2="1867" y2="1376.75" stroke="#000" stroke-width="2"/><line x1="1859.5" y1="1364.0" x2="1867" y2="1364.0" stroke="#000" stroke-width="2"/><line x1="1859.5" y1="1351.25" x2="1867" y2="1351.25" stroke="#000" stroke-width="2"/><line x1="1855" y1="1338.5" x2="1870" y2="1338.5" stroke="#000" stroke-width="2"/><line x1="1859.5" y1="1325.75" x2="1867" y2="1325.75" stroke="#000" stroke-width="2"/><line x1="1859.5" y1="1313.0" x2="1867" y2="1313.0" stroke="#000" stroke-width="2"/><line x1="1859.5" y1="1300.25" x2="1867" y2="1300.25" stroke="#000" stroke-width="2"/><line x1="1859.5" y1="1287.5" x2="1867" y2="1287.5" stroke="#000" stroke-width="2"/><line x1="1855" y1="1274.75" x2="1870" y2="1274.75" stroke="#000" stroke-width="2"/><line x1="1859.5" y1="1262.0" x2="1867" y2="1262.0" stroke="#000" stroke-width="2"/><line x1="1859.5" y1="1249.25" x2="1867" y2="1249.25" stroke="#000" stroke-width="2"/><line x1="1859.5" y1="1236.5" x2="1867" y2="1236.5" stroke="#000" stroke-width="2"/><line x1="1859.5" y1="1223.75" x2="1867" y2="1223.75" stroke="#000" stroke-width="2"/><line x1="1855" y1="1211.0" x2="1870" y2="1211.0" stroke="#000" stroke-width="2"/><line x1="1859.5" y1="1198.25" x2="1867" y2="1198.25" stroke="#000" stroke-width="2"/><line x1="1859.5" y1="1185.5" x2="1867" y2="1185.5" stroke="#000" stroke-width="2"/><text x="1844" y="1473.5" font-size="21.5" fill="#444" text-anchor="end">0</text><text x="1844" y="1409.75" font-size="21.5" fill="#444" text-anchor="end">5000</text><text x="1844" y="1346.0" font-size="21.5" fill="#444" text-anchor="end">10000</text><text x="1844" y="1282.25" font-size="21.5" fill="#444" text-anchor="end">15000</text><text x="1844" y="1218.5" font-size="21.5" fill="#444" text-anchor="end">20000</text><text x="0" y="0" font-size="19" font-weight="700" fill="#444" text-anchor="middle" transform="translate(1764,1325) rotate(-90)">Frequency</text><line x1="2397" y1="1185" x2="2397" y2="1467" stroke="#000" stroke-width="2.2"/><line x1="2393" y1="1466.0" x2="2409" y2="1466.0" stroke="#000" stroke-width="2"/><line x1="2397" y1="1456.38" x2="2405" y2="1456.38" stroke="#000" stroke-width="2"/><line x1="2397" y1="1446.76" x2="2405" y2="1446.76" stroke="#000" stroke-width="2"/><line x1="2397" y1="1437.14" x2="2405" y2="1437.14" stroke="#000" stroke-width="2"/><line x1="2397" y1="1427.52" x2="2405" y2="1427.52" stroke="#000" stroke-width="2"/><line x1="2393" y1="1417.9" x2="2409" y2="1417.9" stroke="#000" stroke-width="2"/><line x1="2397" y1="1408.28" x2="2405" y2="1408.28" stroke="#000" stroke-width="2"/><line x1="2397" y1="1398.66" x2="2405" y2="1398.66" stroke="#000" stroke-width="2"/><line x1="2397" y1="1389.04" x2="2405" y2="1389.04" stroke="#000" stroke-width="2"/><line x1="2397" y1="1379.42" x2="2405" y2="1379.42" stroke="#000" stroke-width="2"/><line x1="2393" y1="1369.8" x2="2409" y2="1369.8" stroke="#000" stroke-width="2"/><line x1="2397" y1="1360.18" x2="2405" y2="1360.18" stroke="#000" stroke-width="2"/><line x1="2397" y1="1350.56" x2="2405" y2="1350.56" stroke="#000" stroke-width="2"/><line x1="2397" y1="1340.94" x2="2405" y2="1340.94" stroke="#000" stroke-width="2"/><line x1="2397" y1="1331.32" x2="2405" y2="1331.32" stroke="#000" stroke-width="2"/><line x1="2393" y1="1321.7" x2="2409" y2="1321.7" stroke="#000" stroke-width="2"/><line x1="2397" y1="1312.08" x2="2405" y2="1312.08" stroke="#000" stroke-width="2"/><line x1="2397" y1="1302.46" x2="2405" y2="1302.46" stroke="#000" stroke-width="2"/><line x1="2397" y1="1292.84" x2="2405" y2="1292.84" stroke="#000" stroke-width="2"/><line x1="2397" y1="1283.22" x2="2405" y2="1283.22" stroke="#000" stroke-width="2"/><line x1="2393" y1="1273.6" x2="2409" y2="1273.6" stroke="#000" stroke-width="2"/><line x1="2397" y1="1263.98" x2="2405" y2="1263.98" stroke="#000" stroke-width="2"/><line x1="2397" y1="1254.3600000000001" x2="2405" y2="1254.3600000000001" stroke="#000" stroke-width="2"/><line x1="2397" y1="1244.74" x2="2405" y2="1244.74" stroke="#000" stroke-width="2"/><line x1="2397" y1="1235.12" x2="2405" y2="1235.12" stroke="#000" stroke-width="2"/><line x1="2393" y1="1225.5" x2="2409" y2="1225.5" stroke="#000" stroke-width="2"/><line x1="2397" y1="1215.88" x2="2405" y2="1215.88" stroke="#000" stroke-width="2"/><line x1="2397" y1="1206.26" x2="2405" y2="1206.26" stroke="#000" stroke-width="2"/><line x1="2397" y1="1196.64" x2="2405" y2="1196.64" stroke="#000" stroke-width="2"/><line x1="2397" y1="1187.02" x2="2405" y2="1187.02" stroke="#000" stroke-width="2"/><text x="2419" y="1473.5" font-size="21.5" fill="#444">0</text><text x="2419" y="1425.4" font-size="21.5" fill="#444">0.05</text><text x="2419" y="1377.3" font-size="21.5" fill="#444">0.1</text><text x="2419" y="1329.2" font-size="21.5" fill="#444">0.15</text><text x="2419" y="1281.1" font-size="21.5" fill="#444">0.2</text><text x="2419" y="1233.0" font-size="21.5" fill="#444">0.25</text><text x="0" y="0" font-size="19" font-weight="700" fill="#d9622b" text-anchor="middle" transform="translate(2480,1324.5) rotate(90)">% Target == 1</text><line x1="1855" y1="1466" x2="2409" y2="1466" stroke="#000" stroke-width="2.2"/><line x1="1915" y1="1466" x2="1915" y2="1479" stroke="#000" stroke-width="2"/><text x="0" y="0" font-size="22" fill="#444" text-anchor="end" transform="translate(1921,1491) rotate(-58)">Another type of loan</text><line x1="1963" y1="1466" x2="1963" y2="1479" stroke="#000" stroke-width="2"/><text x="0" y="0" font-size="22" fill="#444" text-anchor="end" transform="translate(1969,1491) rotate(-58)">Car loan</text><line x1="2011" y1="1466" x2="2011" y2="1479" stroke="#000" stroke-width="2"/><text x="0" y="0" font-size="22" fill="#444" text-anchor="end" transform="translate(2017,1491) rotate(-58)">Consumer credit</text><line x1="2059" y1="1466" x2="2059" y2="1479" stroke="#000" stroke-width="2"/><text x="0" y="0" font-size="22" fill="#444" text-anchor="end" transform="translate(2065,1491) rotate(-58)">Credit card</text><line x1="2107" y1="1466" x2="2107" y2="1479" stroke="#000" stroke-width="2"/><text x="0" y="0" font-size="22" fill="#444" text-anchor="end" transform="translate(2113,1491) rotate(-58)">Loan for business deve...</text><line x1="2156.5" y1="1466" x2="2156.5" y2="1479" stroke="#000" stroke-width="2"/><text x="0" y="0" font-size="22" fill="#444" text-anchor="end" transform="translate(2162.5,1491) rotate(-58)">Loan for working capit...</text><line x1="2204.6" y1="1466" x2="2204.6" y2="1479" stroke="#000" stroke-width="2"/><text x="0" y="0" font-size="22" fill="#444" text-anchor="end" transform="translate(2210.6,1491) rotate(-58)">Microloan</text><line x1="2252.6" y1="1466" x2="2252.6" y2="1479" stroke="#000" stroke-width="2"/><text x="0" y="0" font-size="22" fill="#444" text-anchor="end" transform="translate(2258.6,1491) rotate(-58)">Mortgage</text><line x1="2300.7" y1="1466" x2="2300.7" y2="1479" stroke="#000" stroke-width="2"/><text x="0" y="0" font-size="22" fill="#444" text-anchor="end" transform="translate(2306.7,1491) rotate(-58)">None</text><line x1="2348.7" y1="1466" x2="2348.7" y2="1479" stroke="#000" stroke-width="2"/><text x="0" y="0" font-size="22" fill="#444" text-anchor="end" transform="translate(2354.7,1491) rotate(-58)">Unknown type of loan</text><defs><clipPath id="pc"><rect x="1868" y="1150" width="529" height="316"/></clipPath></defs><g clip-path="url(#pc)"><polyline points="1915,1386.25 1963,1431.75 2011,1392 2059,1370.75 2107,1466 2156.5,1198 2204.6,1250.7 2252.6,1430 2300.7,1396.25 2348.7,1466" fill="none" stroke="#d9622b" stroke-width="4.2" stroke-linejoin="round"/><circle cx="1915" cy="1386.25" r="9.5" fill="#fff" stroke="#d9622b" stroke-width="6"/><circle cx="1963" cy="1431.75" r="9.5" fill="#fff" stroke="#d9622b" stroke-width="6"/><circle cx="2011" cy="1392" r="9.5" fill="#fff" stroke="#d9622b" stroke-width="6"/><circle cx="2059" cy="1370.75" r="9.5" fill="#fff" stroke="#d9622b" stroke-width="6"/><circle cx="2107" cy="1466" r="9.5" fill="#fff" stroke="#d9622b" stroke-width="6"/><circle cx="2156.5" cy="1198" r="9.5" fill="#fff" stroke="#d9622b" stroke-width="6"/><circle cx="2204.6" cy="1250.7" r="9.5" fill="#fff" stroke="#d9622b" stroke-width="6"/><circle cx="2252.6" cy="1430" r="9.5" fill="#fff" stroke="#d9622b" stroke-width="6"/><circle cx="2300.7" cy="1396.25" r="9.5" fill="#fff" stroke="#d9622b" stroke-width="6"/><circle cx="2348.7" cy="1466" r="9.5" fill="#fff" stroke="#d9622b" stroke-width="6"/></g><line x1="1855" y1="1466" x2="2409" y2="1466" stroke="#000" stroke-width="2.2"/><text x="2132" y="1746" font-size="21" font-weight="700" fill="#444" text-anchor="middle">Top 20 categories for Feature</text></svg>
<svg class="r" style="left:2642px;top:390px;" width="40" height="40" viewBox="0 0 24 24" fill="none" stroke="#3b82e0" stroke-width="1.6" stroke-linecap="round" stroke-linejoin="round"><path d="M20 12l-10 0"/><path d="M20 12l-4 4"/><path d="M20 12l-4 -4"/><path d="M4 4l0 16"/></svg>
<div class="t " style="left:2708.75px;top:397.29px;font-size:28px;font-weight:400;color:#0b1633;letter-spacing:0.840px;-webkit-text-stroke:0.85px currentColor;">Feature List Builder</div>
<div class="r" style="left:3354.8px;top:401.3px;width:6.4px;height:6.4px;border-radius:50%;background:#8a9097"></div>
<div class="r" style="left:3354.8px;top:408.55px;width:6.4px;height:6.4px;border-radius:50%;background:#8a9097"></div>
<div class="r" style="left:3354.8px;top:415.8px;width:6.4px;height:6.4px;border-radius:50%;background:#8a9097"></div>
<div class="r" style="left:2640px;top:458px;width:736px;height:2px;background:#d5d9de"></div>
<svg class="r" style="left:2639.15px;top:483.4px;" width="40.7" height="40.7" viewBox="0 0 24 24" fill="none" stroke="#474e57" stroke-width="1.5" stroke-linecap="round" stroke-linejoin="round"><path d="M12 12m-9 0a9 9 0 1 0 18 0a9 9 0 1 0 -18 0"/><path d="M9 12l2 2l4 -4"/></svg>
<div class="t " style="left:2690.5px;top:488.79px;font-size:28px;font-weight:400;color:#474e57;letter-spacing:2.531px;-webkit-text-stroke:0.5px currentColor;">0%</div>
<svg class="r" style="left:2768.2px;top:484.0px;" width="40" height="40" viewBox="0 0 24 24" fill="none" stroke="#474e57" stroke-width="1.5" stroke-linecap="round" stroke-linejoin="round"><g transform="translate(12 12) scale(0.9) translate(-12 -12)"><path d="M9.29 9.275a9.03 9.03 0 0 0 -.29 .225a6 6 0 0 0 -5 3a8 8 0 0 1 7 7a6 6 0 0 0 3 -5c.79 -.59 1.5 -1.21 2.13 -1.87m1.95 -2.05a17.001 17.001 0 0 0 2.85 -7.085a3 3 0 0 0 -3 -3a17 17 0 0 0 -7.02 2.83"/><path d="M7 14a6 6 0 0 0 -3 6a6 6 0 0 0 6 -3"/><path d="M15 9m-1 0a1 1 0 1 0 2 0a1 1 0 1 0 -2 0"/></g><path d="M3 3l18 18"/></svg>
<div class="t " style="left:2818.7px;top:488.79px;font-size:28px;font-weight:400;color:#474e57;letter-spacing:2.531px;-webkit-text-stroke:0.5px currentColor;">0%</div>
<div class="r" style="left:2640px;top:548px;width:736px;height:2px;background:#d5d9de"></div>
<div class="t " style="left:2641.25px;top:578.99px;font-size:26px;font-weight:400;color:#0b1633;letter-spacing:0.050px;-webkit-text-stroke:0.5px currentColor;">Contains <b style="-webkit-text-stroke:0.4px currentColor">294</b> features across</div>
<div class="t " style="left:2988.7px;top:578.99px;font-size:26px;font-weight:400;color:#3b78f2;letter-spacing:-0.051px;-webkit-text-stroke:0.5px currentColor;">26 themes</div>
<svg class="r" style="left:3115.3px;top:577.5px;" width="34" height="34" viewBox="0 0 24 24" fill="none" stroke="#3b78f2" stroke-width="1.6" stroke-linecap="round" stroke-linejoin="round"><path d="M5.5 5h13a1 1 0 0 1 .5 1.5l-5 5.5l0 7l-4 -3l0 -4l-5 -5.5a1 1 0 0 1 .5 -1.5"/></svg>
<div class="t " style="left:3169px;top:578.99px;font-size:26px;font-weight:400;color:#0b1633;letter-spacing:-0.064px;-webkit-text-stroke:0.5px currentColor;">and 2 entities:</div>
<div class="r bd" style="left:2646px;top:620.5px;width:98.5px;height:31px;border:2.5px solid #b04fd6;border-radius:15.5px;color:#b04fd6;font-size:18.5px;line-height:26.0px;letter-spacing:0.041px;text-indent:0.041px;background:transparent;font-weight:400;-webkit-text-stroke:0.85px currentColor">CLIENT</div>
<div class="r bd" style="left:2757.3px;top:620.5px;width:205.7px;height:31px;border:2.5px solid #b04fd6;border-radius:15.5px;color:#b04fd6;font-size:18.5px;line-height:26.0px;letter-spacing:0.482px;text-indent:0.482px;background:transparent;font-weight:400;-webkit-text-stroke:0.85px currentColor">NEW APPLICATION</div>
<div class="t " style="left:2970px;top:620.99px;font-size:26px;font-weight:700;color:#0b1633;letter-spacing:0.000px;">.</div>
<div class="r" style="left:2640px;top:672px;width:736px;height:2px;background:#d5d9de"></div>
<svg class="r" style="left:2641.55px;top:706.35px;" width="32.5" height="32.5" viewBox="0 0 24 24" fill="none" stroke="#7c838b" stroke-width="1.45" stroke-linecap="round" stroke-linejoin="round"><path d="M12 12m-9 0a9 9 0 1 0 18 0a9 9 0 1 0 -18 0"/><path d="M9 12l6 0"/></svg>
<div class="t " style="left:2686.5px;top:710.99px;font-size:26px;font-weight:400;color:#0b1633;letter-spacing:-1.050px;-webkit-text-stroke:0.5px currentColor;">CLIENT_BureauReportedCredit_CREDIT_TYPE_...</div>
<svg class="r" style="left:3276.2px;top:708.1px;" width="33.6" height="33.6" viewBox="0 0 24 24" fill="none" stroke="#474e57" stroke-width="1.75" stroke-linecap="round" stroke-linejoin="round"><path d="M12 12m-9 0a9 9 0 1 0 18 0a9 9 0 1 0 -18 0"/><path d="M9 12l2 2l4 -4"/></svg>
<svg class="r" style="left:3319.0px;top:706.9px;" width="36" height="36" viewBox="0 0 24 24" fill="none" stroke="#474e57" stroke-width="1.65" stroke-linecap="round" stroke-linejoin="round"><g transform="translate(12 12) scale(0.9) translate(-12 -12)"><path d="M9.29 9.275a9.03 9.03 0 0 0 -.29 .225a6 6 0 0 0 -5 3a8 8 0 0 1 7 7a6 6 0 0 0 3 -5c.79 -.59 1.5 -1.21 2.13 -1.87m1.95 -2.05a17.001 17.001 0 0 0 2.85 -7.085a3 3 0 0 0 -3 -3a17 17 0 0 0 -7.02 2.83"/><path d="M7 14a6 6 0 0 0 -3 6a6 6 0 0 0 6 -3"/><path d="M15 9m-1 0a1 1 0 1 0 2 0a1 1 0 1 0 -2 0"/></g><path d="M3 3l18 18"/></svg>
<svg class="r" style="left:2641.55px;top:766.35px;" width="32.5" height="32.5" viewBox="0 0 24 24" fill="none" stroke="#7c838b" stroke-width="1.45" stroke-linecap="round" stroke-linejoin="round"><path d="M12 12m-9 0a9 9 0 1 0 18 0a9 9 0 1 0 -18 0"/><path d="M9 12l6 0"/></svg>
<div class="t " style="left:2686.5px;top:770.99px;font-size:26px;font-weight:400;color:#0b1633;letter-spacing:-1.476px;-webkit-text-stroke:0.5px currentColor;">CLIENT_Age</div>
<svg class="r" style="left:3276.2px;top:768.1px;" width="33.6" height="33.6" viewBox="0 0 24 24" fill="none" stroke="#474e57" stroke-width="1.75" stroke-linecap="round" stroke-linejoin="round"><path d="M12 12m-9 0a9 9 0 1 0 18 0a9 9 0 1 0 -18 0"/><path d="M9 12l2 2l4 -4"/></svg>
<svg class="r" style="left:3319.0px;top:766.9px;" width="36" height="36" viewBox="0 0 24 24" fill="none" stroke="#474e57" stroke-width="1.65" stroke-linecap="round" stroke-linejoin="round"><g transform="translate(12 12) scale(0.9) translate(-12 -12)"><path d="M9.29 9.275a9.03 9.03 0 0 0 -.29 .225a6 6 0 0 0 -5 3a8 8 0 0 1 7 7a6 6 0 0 0 3 -5c.79 -.59 1.5 -1.21 2.13 -1.87m1.95 -2.05a17.001 17.001 0 0 0 2.85 -7.085a3 3 0 0 0 -3 -3a17 17 0 0 0 -7.02 2.83"/><path d="M7 14a6 6 0 0 0 -3 6a6 6 0 0 0 6 -3"/><path d="M15 9m-1 0a1 1 0 1 0 2 0a1 1 0 1 0 -2 0"/></g><path d="M3 3l18 18"/></svg>
<svg class="r" style="left:2641.55px;top:826.35px;" width="32.5" height="32.5" viewBox="0 0 24 24" fill="none" stroke="#7c838b" stroke-width="1.45" stroke-linecap="round" stroke-linejoin="round"><path d="M12 12m-9 0a9 9 0 1 0 18 0a9 9 0 1 0 -18 0"/><path d="M9 12l6 0"/></svg>
<div class="t " style="left:2686.5px;top:830.99px;font-size:26px;font-weight:400;color:#0b1633;letter-spacing:-0.749px;-webkit-text-stroke:0.5px currentColor;">CLIENT_Age_band</div>
<svg class="r" style="left:3276.2px;top:828.1px;" width="33.6" height="33.6" viewBox="0 0 24 24" fill="none" stroke="#474e57" stroke-width="1.75" stroke-linecap="round" stroke-linejoin="round"><path d="M12 12m-9 0a9 9 0 1 0 18 0a9 9 0 1 0 -18 0"/><path d="M9 12l2 2l4 -4"/></svg>
<svg class="r" style="left:3319.0px;top:826.9px;" width="36" height="36" viewBox="0 0 24 24" fill="none" stroke="#474e57" stroke-width="1.65" stroke-linecap="round" stroke-linejoin="round"><g transform="translate(12 12) scale(0.9) translate(-12 -12)"><path d="M9.29 9.275a9.03 9.03 0 0 0 -.29 .225a6 6 0 0 0 -5 3a8 8 0 0 1 7 7a6 6 0 0 0 3 -5c.79 -.59 1.5 -1.21 2.13 -1.87m1.95 -2.05a17.001 17.001 0 0 0 2.85 -7.085a3 3 0 0 0 -3 -3a17 17 0 0 0 -7.02 2.83"/><path d="M7 14a6 6 0 0 0 -3 6a6 6 0 0 0 6 -3"/><path d="M15 9m-1 0a1 1 0 1 0 2 0a1 1 0 1 0 -2 0"/></g><path d="M3 3l18 18"/></svg>
<svg class="r" style="left:2641.55px;top:886.35px;" width="32.5" height="32.5" viewBox="0 0 24 24" fill="none" stroke="#7c838b" stroke-width="1.45" stroke-linecap="round" stroke-linejoin="round"><path d="M12 12m-9 0a9 9 0 1 0 18 0a9 9 0 1 0 -18 0"/><path d="M9 12l6 0"/></svg>
<div class="t " style="left:2686.5px;top:890.99px;font-size:26px;font-weight:400;color:#0b1633;letter-spacing:-0.742px;-webkit-text-stroke:0.5px currentColor;">CLIENT_Avg_of_BureauReportedCredits_AMT_...</div>
<svg class="r" style="left:3276.2px;top:888.1px;" width="33.6" height="33.6" viewBox="0 0 24 24" fill="none" stroke="#474e57" stroke-width="1.75" stroke-linecap="round" stroke-linejoin="round"><path d="M12 12m-9 0a9 9 0 1 0 18 0a9 9 0 1 0 -18 0"/><path d="M9 12l2 2l4 -4"/></svg>
<svg class="r" style="left:3319.0px;top:886.9px;" width="36" height="36" viewBox="0 0 24 24" fill="none" stroke="#474e57" stroke-width="1.65" stroke-linecap="round" stroke-linejoin="round"><g transform="translate(12 12) scale(0.9) translate(-12 -12)"><path d="M9.29 9.275a9.03 9.03 0 0 0 -.29 .225a6 6 0 0 0 -5 3a8 8 0 0 1 7 7a6 6 0 0 0 3 -5c.79 -.59 1.5 -1.21 2.13 -1.87m1.95 -2.05a17.001 17.001 0 0 0 2.85 -7.085a3 3 0 0 0 -3 -3a17 17 0 0 0 -7.02 2.83"/><path d="M7 14a6 6 0 0 0 -3 6a6 6 0 0 0 6 -3"/><path d="M15 9m-1 0a1 1 0 1 0 2 0a1 1 0 1 0 -2 0"/></g><path d="M3 3l18 18"/></svg>
<svg class="r" style="left:2641.55px;top:946.35px;" width="32.5" height="32.5" viewBox="0 0 24 24" fill="none" stroke="#7c838b" stroke-width="1.45" stroke-linecap="round" stroke-linejoin="round"><path d="M12 12m-9 0a9 9 0 1 0 18 0a9 9 0 1 0 -18 0"/><path d="M9 12l6 0"/></svg>
<div class="t " style="left:2686.5px;top:950.99px;font-size:26px;font-weight:400;color:#0b1633;letter-spacing:-0.742px;-webkit-text-stroke:0.5px currentColor;">CLIENT_Avg_of_BureauReportedCredits_AMT_...</div>
<svg class="r" style="left:3276.2px;top:948.1px;" width="33.6" height="33.6" viewBox="0 0 24 24" fill="none" stroke="#474e57" stroke-width="1.75" stroke-linecap="round" stroke-linejoin="round"><path d="M12 12m-9 0a9 9 0 1 0 18 0a9 9 0 1 0 -18 0"/><path d="M9 12l2 2l4 -4"/></svg>
<svg class="r" style="left:3319.0px;top:946.9px;" width="36" height="36" viewBox="0 0 24 24" fill="none" stroke="#474e57" stroke-width="1.65" stroke-linecap="round" stroke-linejoin="round"><g transform="translate(12 12) scale(0.9) translate(-12 -12)"><path d="M9.29 9.275a9.03 9.03 0 0 0 -.29 .225a6 6 0 0 0 -5 3a8 8 0 0 1 7 7a6 6 0 0 0 3 -5c.79 -.59 1.5 -1.21 2.13 -1.87m1.95 -2.05a17.001 17.001 0 0 0 2.85 -7.085a3 3 0 0 0 -3 -3a17 17 0 0 0 -7.02 2.83"/><path d="M7 14a6 6 0 0 0 -3 6a6 6 0 0 0 6 -3"/><path d="M15 9m-1 0a1 1 0 1 0 2 0a1 1 0 1 0 -2 0"/></g><path d="M3 3l18 18"/></svg>
<svg class="r" style="left:2641.55px;top:1006.35px;" width="32.5" height="32.5" viewBox="0 0 24 24" fill="none" stroke="#7c838b" stroke-width="1.45" stroke-linecap="round" stroke-linejoin="round"><path d="M12 12m-9 0a9 9 0 1 0 18 0a9 9 0 1 0 -18 0"/><path d="M9 12l6 0"/></svg>
<div class="t " style="left:2686.5px;top:1010.99px;font-size:26px;font-weight:400;color:#0b1633;letter-spacing:-0.613px;-webkit-text-stroke:0.5px currentColor;">CLIENT_Avg_of_BureauReportedCredits_Availa...</div>
<svg class="r" style="left:3276.2px;top:1008.1000000000001px;" width="33.6" height="33.6" viewBox="0 0 24 24" fill="none" stroke="#474e57" stroke-width="1.75" stroke-linecap="round" stroke-linejoin="round"><path d="M12 12m-9 0a9 9 0 1 0 18 0a9 9 0 1 0 -18 0"/><path d="M9 12l2 2l4 -4"/></svg>
<svg class="r" style="left:3319.0px;top:1006.9000000000001px;" width="36" height="36" viewBox="0 0 24 24" fill="none" stroke="#474e57" stroke-width="1.65" stroke-linecap="round" stroke-linejoin="round"><g transform="translate(12 12) scale(0.9) translate(-12 -12)"><path d="M9.29 9.275a9.03 9.03 0 0 0 -.29 .225a6 6 0 0 0 -5 3a8 8 0 0 1 7 7a6 6 0 0 0 3 -5c.79 -.59 1.5 -1.21 2.13 -1.87m1.95 -2.05a17.001 17.001 0 0 0 2.85 -7.085a3 3 0 0 0 -3 -3a17 17 0 0 0 -7.02 2.83"/><path d="M7 14a6 6 0 0 0 -3 6a6 6 0 0 0 6 -3"/><path d="M15 9m-1 0a1 1 0 1 0 2 0a1 1 0 1 0 -2 0"/></g><path d="M3 3l18 18"/></svg>
<svg class="r" style="left:2641.55px;top:1066.35px;" width="32.5" height="32.5" viewBox="0 0 24 24" fill="none" stroke="#7c838b" stroke-width="1.45" stroke-linecap="round" stroke-linejoin="round"><path d="M12 12m-9 0a9 9 0 1 0 18 0a9 9 0 1 0 -18 0"/><path d="M9 12l6 0"/></svg>
<div class="t " style="left:2686.5px;top:1070.99px;font-size:26px;font-weight:400;color:#0b1633;letter-spacing:-0.638px;-webkit-text-stroke:0.5px currentColor;">CLIENT_Avg_of_BureauReportedCredits_Overd...</div>
<svg class="r" style="left:3276.2px;top:1068.1px;" width="33.6" height="33.6" viewBox="0 0 24 24" fill="none" stroke="#474e57" stroke-width="1.75" stroke-linecap="round" stroke-linejoin="round"><path d="M12 12m-9 0a9 9 0 1 0 18 0a9 9 0 1 0 -18 0"/><path d="M9 12l2 2l4 -4"/></svg>
<svg class="r" style="left:3319.0px;top:1066.8999999999999px;" width="36" height="36" viewBox="0 0 24 24" fill="none" stroke="#474e57" stroke-width="1.65" stroke-linecap="round" stroke-linejoin="round"><g transform="translate(12 12) scale(0.9) translate(-12 -12)"><path d="M9.29 9.275a9.03 9.03 0 0 0 -.29 .225a6 6 0 0 0 -5 3a8 8 0 0 1 7 7a6 6 0 0 0 3 -5c.79 -.59 1.5 -1.21 2.13 -1.87m1.95 -2.05a17.001 17.001 0 0 0 2.85 -7.085a3 3 0 0 0 -3 -3a17 17 0 0 0 -7.02 2.83"/><path d="M7 14a6 6 0 0 0 -3 6a6 6 0 0 0 6 -3"/><path d="M15 9m-1 0a1 1 0 1 0 2 0a1 1 0 1 0 -2 0"/></g><path d="M3 3l18 18"/></svg>
<svg class="r" style="left:2641.55px;top:1126.35px;" width="32.5" height="32.5" viewBox="0 0 24 24" fill="none" stroke="#7c838b" stroke-width="1.45" stroke-linecap="round" stroke-linejoin="round"><path d="M12 12m-9 0a9 9 0 1 0 18 0a9 9 0 1 0 -18 0"/><path d="M9 12l6 0"/></svg>
<div class="t " style="left:2686.5px;top:1130.99px;font-size:26px;font-weight:400;color:#0b1633;letter-spacing:-0.638px;-webkit-text-stroke:0.5px currentColor;">CLIENT_Avg_of_BureauReportedCredits_Overd...</div>
<svg class="r" style="left:3276.2px;top:1128.1px;" width="33.6" height="33.6" viewBox="0 0 24 24" fill="none" stroke="#474e57" stroke-width="1.75" stroke-linecap="round" stroke-linejoin="round"><path d="M12 12m-9 0a9 9 0 1 0 18 0a9 9 0 1 0 -18 0"/><path d="M9 12l2 2l4 -4"/></svg>
<svg class="r" style="left:3319.0px;top:1126.8999999999999px;" width="36" height="36" viewBox="0 0 24 24" fill="none" stroke="#474e57" stroke-width="1.65" stroke-linecap="round" stroke-linejoin="round"><g transform="translate(12 12) scale(0.9) translate(-12 -12)"><path d="M9.29 9.275a9.03 9.03 0 0 0 -.29 .225a6 6 0 0 0 -5 3a8 8 0 0 1 7 7a6 6 0 0 0 3 -5c.79 -.59 1.5 -1.21 2.13 -1.87m1.95 -2.05a17.001 17.001 0 0 0 2.85 -7.085a3 3 0 0 0 -3 -3a17 17 0 0 0 -7.02 2.83"/><path d="M7 14a6 6 0 0 0 -3 6a6 6 0 0 0 6 -3"/><path d="M15 9m-1 0a1 1 0 1 0 2 0a1 1 0 1 0 -2 0"/></g><path d="M3 3l18 18"/></svg>
<svg class="r" style="left:2641.55px;top:1186.35px;" width="32.5" height="32.5" viewBox="0 0 24 24" fill="none" stroke="#7c838b" stroke-width="1.45" stroke-linecap="round" stroke-linejoin="round"><path d="M12 12m-9 0a9 9 0 1 0 18 0a9 9 0 1 0 -18 0"/><path d="M9 12l6 0"/></svg>
<div class="t " style="left:2686.5px;top:1190.99px;font-size:26px;font-weight:400;color:#0b1633;letter-spacing:-0.866px;-webkit-text-stroke:0.5px currentColor;">CLIENT_Avg_of_Installments_AMT_PAYMENTs_...</div>
<svg class="r" style="left:3276.2px;top:1188.1px;" width="33.6" height="33.6" viewBox="0 0 24 24" fill="none" stroke="#474e57" stroke-width="1.75" stroke-linecap="round" stroke-linejoin="round"><path d="M12 12m-9 0a9 9 0 1 0 18 0a9 9 0 1 0 -18 0"/><path d="M9 12l2 2l4 -4"/></svg>
<svg class="r" style="left:3319.0px;top:1186.8999999999999px;" width="36" height="36" viewBox="0 0 24 24" fill="none" stroke="#474e57" stroke-width="1.65" stroke-linecap="round" stroke-linejoin="round"><g transform="translate(12 12) scale(0.9) translate(-12 -12)"><path d="M9.29 9.275a9.03 9.03 0 0 0 -.29 .225a6 6 0 0 0 -5 3a8 8 0 0 1 7 7a6 6 0 0 0 3 -5c.79 -.59 1.5 -1.21 2.13 -1.87m1.95 -2.05a17.001 17.001 0 0 0 2.85 -7.085a3 3 0 0 0 -3 -3a17 17 0 0 0 -7.02 2.83"/><path d="M7 14a6 6 0 0 0 -3 6a6 6 0 0 0 6 -3"/><path d="M15 9m-1 0a1 1 0 1 0 2 0a1 1 0 1 0 -2 0"/></g><path d="M3 3l18 18"/></svg>
<svg class="r" style="left:2641.55px;top:1246.35px;" width="32.5" height="32.5" viewBox="0 0 24 24" fill="none" stroke="#7c838b" stroke-width="1.45" stroke-linecap="round" stroke-linejoin="round"><path d="M12 12m-9 0a9 9 0 1 0 18 0a9 9 0 1 0 -18 0"/><path d="M9 12l6 0"/></svg>
<div class="t " style="left:2686.5px;top:1250.99px;font-size:26px;font-weight:400;color:#0b1633;letter-spacing:-0.775px;-webkit-text-stroke:0.5px currentColor;">CLIENT_Avg_of_Installments_NUM_INSTALMEN...</div>
<svg class="r" style="left:3276.2px;top:1248.1px;" width="33.6" height="33.6" viewBox="0 0 24 24" fill="none" stroke="#474e57" stroke-width="1.75" stroke-linecap="round" stroke-linejoin="round"><path d="M12 12m-9 0a9 9 0 1 0 18 0a9 9 0 1 0 -18 0"/><path d="M9 12l2 2l4 -4"/></svg>
<svg class="r" style="left:3319.0px;top:1246.8999999999999px;" width="36" height="36" viewBox="0 0 24 24" fill="none" stroke="#474e57" stroke-width="1.65" stroke-linecap="round" stroke-linejoin="round"><g transform="translate(12 12) scale(0.9) translate(-12 -12)"><path d="M9.29 9.275a9.03 9.03 0 0 0 -.29 .225a6 6 0 0 0 -5 3a8 8 0 0 1 7 7a6 6 0 0 0 3 -5c.79 -.59 1.5 -1.21 2.13 -1.87m1.95 -2.05a17.001 17.001 0 0 0 2.85 -7.085a3 3 0 0 0 -3 -3a17 17 0 0 0 -7.02 2.83"/><path d="M7 14a6 6 0 0 0 -3 6a6 6 0 0 0 6 -3"/><path d="M15 9m-1 0a1 1 0 1 0 2 0a1 1 0 1 0 -2 0"/></g><path d="M3 3l18 18"/></svg>
<svg class="r" style="left:2641.55px;top:1306.35px;" width="32.5" height="32.5" viewBox="0 0 24 24" fill="none" stroke="#7c838b" stroke-width="1.45" stroke-linecap="round" stroke-linejoin="round"><path d="M12 12m-9 0a9 9 0 1 0 18 0a9 9 0 1 0 -18 0"/><path d="M9 12l6 0"/></svg>
<div class="t " style="left:2686.5px;top:1310.99px;font-size:26px;font-weight:400;color:#0b1633;letter-spacing:-0.775px;-webkit-text-stroke:0.5px currentColor;">CLIENT_Avg_of_Installments_NUM_INSTALMEN...</div>
<svg class="r" style="left:3276.2px;top:1308.1px;" width="33.6" height="33.6" viewBox="0 0 24 24" fill="none" stroke="#474e57" stroke-width="1.75" stroke-linecap="round" stroke-linejoin="round"><path d="M12 12m-9 0a9 9 0 1 0 18 0a9 9 0 1 0 -18 0"/><path d="M9 12l2 2l4 -4"/></svg>
<svg class="r" style="left:3319.0px;top:1306.8999999999999px;" width="36" height="36" viewBox="0 0 24 24" fill="none" stroke="#474e57" stroke-width="1.65" stroke-linecap="round" stroke-linejoin="round"><g transform="translate(12 12) scale(0.9) translate(-12 -12)"><path d="M9.29 9.275a9.03 9.03 0 0 0 -.29 .225a6 6 0 0 0 -5 3a8 8 0 0 1 7 7a6 6 0 0 0 3 -5c.79 -.59 1.5 -1.21 2.13 -1.87m1.95 -2.05a17.001 17.001 0 0 0 2.85 -7.085a3 3 0 0 0 -3 -3a17 17 0 0 0 -7.02 2.83"/><path d="M7 14a6 6 0 0 0 -3 6a6 6 0 0 0 6 -3"/><path d="M15 9m-1 0a1 1 0 1 0 2 0a1 1 0 1 0 -2 0"/></g><path d="M3 3l18 18"/></svg>
<svg class="r" style="left:2641.55px;top:1366.35px;" width="32.5" height="32.5" viewBox="0 0 24 24" fill="none" stroke="#7c838b" stroke-width="1.45" stroke-linecap="round" stroke-linejoin="round"><path d="M12 12m-9 0a9 9 0 1 0 18 0a9 9 0 1 0 -18 0"/><path d="M9 12l6 0"/></svg>
<div class="t " style="left:2686.5px;top:1370.99px;font-size:26px;font-weight:400;color:#0b1633;letter-spacing:-0.775px;-webkit-text-stroke:0.5px currentColor;">CLIENT_Avg_of_Installments_NUM_INSTALMEN...</div>
<svg class="r" style="left:3276.2px;top:1368.1px;" width="33.6" height="33.6" viewBox="0 0 24 24" fill="none" stroke="#474e57" stroke-width="1.75" stroke-linecap="round" stroke-linejoin="round"><path d="M12 12m-9 0a9 9 0 1 0 18 0a9 9 0 1 0 -18 0"/><path d="M9 12l2 2l4 -4"/></svg>
<svg class="r" style="left:3319.0px;top:1366.8999999999999px;" width="36" height="36" viewBox="0 0 24 24" fill="none" stroke="#474e57" stroke-width="1.65" stroke-linecap="round" stroke-linejoin="round"><g transform="translate(12 12) scale(0.9) translate(-12 -12)"><path d="M9.29 9.275a9.03 9.03 0 0 0 -.29 .225a6 6 0 0 0 -5 3a8 8 0 0 1 7 7a6 6 0 0 0 3 -5c.79 -.59 1.5 -1.21 2.13 -1.87m1.95 -2.05a17.001 17.001 0 0 0 2.85 -7.085a3 3 0 0 0 -3 -3a17 17 0 0 0 -7.02 2.83"/><path d="M7 14a6 6 0 0 0 -3 6a6 6 0 0 0 6 -3"/><path d="M15 9m-1 0a1 1 0 1 0 2 0a1 1 0 1 0 -2 0"/></g><path d="M3 3l18 18"/></svg>
<svg class="r" style="left:2641.55px;top:1426.35px;" width="32.5" height="32.5" viewBox="0 0 24 24" fill="none" stroke="#7c838b" stroke-width="1.45" stroke-linecap="round" stroke-linejoin="round"><path d="M12 12m-9 0a9 9 0 1 0 18 0a9 9 0 1 0 -18 0"/><path d="M9 12l6 0"/></svg>
<div class="t " style="left:2686.5px;top:1430.99px;font-size:26px;font-weight:400;color:#0b1633;letter-spacing:-0.768px;-webkit-text-stroke:0.5px currentColor;">CLIENT_Avg_of_Installments_Payment_Delay_D...</div>
<svg class="r" style="left:3276.2px;top:1428.1px;" width="33.6" height="33.6" viewBox="0 0 24 24" fill="none" stroke="#474e57" stroke-width="1.75" stroke-linecap="round" stroke-linejoin="round"><path d="M12 12m-9 0a9 9 0 1 0 18 0a9 9 0 1 0 -18 0"/><path d="M9 12l2 2l4 -4"/></svg>
<svg class="r" style="left:3319.0px;top:1426.8999999999999px;" width="36" height="36" viewBox="0 0 24 24" fill="none" stroke="#474e57" stroke-width="1.65" stroke-linecap="round" stroke-linejoin="round"><g transform="translate(12 12) scale(0.9) translate(-12 -12)"><path d="M9.29 9.275a9.03 9.03 0 0 0 -.29 .225a6 6 0 0 0 -5 3a8 8 0 0 1 7 7a6 6 0 0 0 3 -5c.79 -.59 1.5 -1.21 2.13 -1.87m1.95 -2.05a17.001 17.001 0 0 0 2.85 -7.085a3 3 0 0 0 -3 -3a17 17 0 0 0 -7.02 2.83"/><path d="M7 14a6 6 0 0 0 -3 6a6 6 0 0 0 6 -3"/><path d="M15 9m-1 0a1 1 0 1 0 2 0a1 1 0 1 0 -2 0"/></g><path d="M3 3l18 18"/></svg>
<svg class="r" style="left:2641.55px;top:1486.35px;" width="32.5" height="32.5" viewBox="0 0 24 24" fill="none" stroke="#7c838b" stroke-width="1.45" stroke-linecap="round" stroke-linejoin="round"><path d="M12 12m-9 0a9 9 0 1 0 18 0a9 9 0 1 0 -18 0"/><path d="M9 12l6 0"/></svg>
<div class="t " style="left:2686.5px;top:1490.99px;font-size:26px;font-weight:400;color:#0b1633;letter-spacing:-0.587px;-webkit-text-stroke:0.5px currentColor;">CLIENT_Avg_of_Installments_Payment_Discrep...</div>
<svg class="r" style="left:3276.2px;top:1488.1px;" width="33.6" height="33.6" viewBox="0 0 24 24" fill="none" stroke="#474e57" stroke-width="1.75" stroke-linecap="round" stroke-linejoin="round"><path d="M12 12m-9 0a9 9 0 1 0 18 0a9 9 0 1 0 -18 0"/><path d="M9 12l2 2l4 -4"/></svg>
<svg class="r" style="left:3319.0px;top:1486.8999999999999px;" width="36" height="36" viewBox="0 0 24 24" fill="none" stroke="#474e57" stroke-width="1.65" stroke-linecap="round" stroke-linejoin="round"><g transform="translate(12 12) scale(0.9) translate(-12 -12)"><path d="M9.29 9.275a9.03 9.03 0 0 0 -.29 .225a6 6 0 0 0 -5 3a8 8 0 0 1 7 7a6 6 0 0 0 3 -5c.79 -.59 1.5 -1.21 2.13 -1.87m1.95 -2.05a17.001 17.001 0 0 0 2.85 -7.085a3 3 0 0 0 -3 -3a17 17 0 0 0 -7.02 2.83"/><path d="M7 14a6 6 0 0 0 -3 6a6 6 0 0 0 6 -3"/><path d="M15 9m-1 0a1 1 0 1 0 2 0a1 1 0 1 0 -2 0"/></g><path d="M3 3l18 18"/></svg>
<svg class="r" style="left:2641.55px;top:1546.35px;" width="32.5" height="32.5" viewBox="0 0 24 24" fill="none" stroke="#7c838b" stroke-width="1.45" stroke-linecap="round" stroke-linejoin="round"><path d="M12 12m-9 0a9 9 0 1 0 18 0a9 9 0 1 0 -18 0"/><path d="M9 12l6 0"/></svg>
<div class="t " style="left:2686.5px;top:1550.99px;font-size:26px;font-weight:400;color:#0b1633;letter-spacing:-0.480px;-webkit-text-stroke:0.5px currentColor;">CLIENT_Avg_of_Installments_PriorApplication_...</div>
<svg class="r" style="left:3276.2px;top:1548.1px;" width="33.6" height="33.6" viewBox="0 0 24 24" fill="none" stroke="#474e57" stroke-width="1.75" stroke-linecap="round" stroke-linejoin="round"><path d="M12 12m-9 0a9 9 0 1 0 18 0a9 9 0 1 0 -18 0"/><path d="M9 12l2 2l4 -4"/></svg>
<svg class="r" style="left:3319.0px;top:1546.8999999999999px;" width="36" height="36" viewBox="0 0 24 24" fill="none" stroke="#474e57" stroke-width="1.65" stroke-linecap="round" stroke-linejoin="round"><g transform="translate(12 12) scale(0.9) translate(-12 -12)"><path d="M9.29 9.275a9.03 9.03 0 0 0 -.29 .225a6 6 0 0 0 -5 3a8 8 0 0 1 7 7a6 6 0 0 0 3 -5c.79 -.59 1.5 -1.21 2.13 -1.87m1.95 -2.05a17.001 17.001 0 0 0 2.85 -7.085a3 3 0 0 0 -3 -3a17 17 0 0 0 -7.02 2.83"/><path d="M7 14a6 6 0 0 0 -3 6a6 6 0 0 0 6 -3"/><path d="M15 9m-1 0a1 1 0 1 0 2 0a1 1 0 1 0 -2 0"/></g><path d="M3 3l18 18"/></svg>
<svg class="r" style="left:2641.55px;top:1606.35px;" width="32.5" height="32.5" viewBox="0 0 24 24" fill="none" stroke="#7c838b" stroke-width="1.45" stroke-linecap="round" stroke-linejoin="round"><path d="M12 12m-9 0a9 9 0 1 0 18 0a9 9 0 1 0 -18 0"/><path d="M9 12l6 0"/></svg>
<div class="t " style="left:2686.5px;top:1610.99px;font-size:26px;font-weight:400;color:#0b1633;letter-spacing:-0.480px;-webkit-text-stroke:0.5px currentColor;">CLIENT_Avg_of_Installments_PriorApplication_...</div>
<svg class="r" style="left:3276.2px;top:1608.1px;" width="33.6" height="33.6" viewBox="0 0 24 24" fill="none" stroke="#474e57" stroke-width="1.75" stroke-linecap="round" stroke-linejoin="round"><path d="M12 12m-9 0a9 9 0 1 0 18 0a9 9 0 1 0 -18 0"/><path d="M9 12l2 2l4 -4"/></svg>
<svg class="r" style="left:3319.0px;top:1606.8999999999999px;" width="36" height="36" viewBox="0 0 24 24" fill="none" stroke="#474e57" stroke-width="1.65" stroke-linecap="round" stroke-linejoin="round"><g transform="translate(12 12) scale(0.9) translate(-12 -12)"><path d="M9.29 9.275a9.03 9.03 0 0 0 -.29 .225a6 6 0 0 0 -5 3a8 8 0 0 1 7 7a6 6 0 0 0 3 -5c.79 -.59 1.5 -1.21 2.13 -1.87m1.95 -2.05a17.001 17.001 0 0 0 2.85 -7.085a3 3 0 0 0 -3 -3a17 17 0 0 0 -7.02 2.83"/><path d="M7 14a6 6 0 0 0 -3 6a6 6 0 0 0 6 -3"/><path d="M15 9m-1 0a1 1 0 1 0 2 0a1 1 0 1 0 -2 0"/></g><path d="M3 3l18 18"/></svg>
<svg class="r" style="left:2641.55px;top:1666.35px;" width="32.5" height="32.5" viewBox="0 0 24 24" fill="none" stroke="#7c838b" stroke-width="1.45" stroke-linecap="round" stroke-linejoin="round"><path d="M12 12m-9 0a9 9 0 1 0 18 0a9 9 0 1 0 -18 0"/><path d="M9 12l6 0"/></svg>
<div class="t " style="left:2686.5px;top:1670.99px;font-size:26px;font-weight:400;color:#0b1633;letter-spacing:-0.480px;-webkit-text-stroke:0.5px currentColor;">CLIENT_Avg_of_Installments_PriorApplication_...</div>
<svg class="r" style="left:3276.2px;top:1668.1px;" width="33.6" height="33.6" viewBox="0 0 24 24" fill="none" stroke="#474e57" stroke-width="1.75" stroke-linecap="round" stroke-linejoin="round"><path d="M12 12m-9 0a9 9 0 1 0 18 0a9 9 0 1 0 -18 0"/><path d="M9 12l2 2l4 -4"/></svg>
<svg class="r" style="left:3319.0px;top:1666.8999999999999px;" width="36" height="36" viewBox="0 0 24 24" fill="none" stroke="#474e57" stroke-width="1.65" stroke-linecap="round" stroke-linejoin="round"><g transform="translate(12 12) scale(0.9) translate(-12 -12)"><path d="M9.29 9.275a9.03 9.03 0 0 0 -.29 .225a6 6 0 0 0 -5 3a8 8 0 0 1 7 7a6 6 0 0 0 3 -5c.79 -.59 1.5 -1.21 2.13 -1.87m1.95 -2.05a17.001 17.001 0 0 0 2.85 -7.085a3 3 0 0 0 -3 -3a17 17 0 0 0 -7.02 2.83"/><path d="M7 14a6 6 0 0 0 -3 6a6 6 0 0 0 6 -3"/><path d="M15 9m-1 0a1 1 0 1 0 2 0a1 1 0 1 0 -2 0"/></g><path d="M3 3l18 18"/></svg>
<div class="r" style="left:2640px;top:1748.4px;width:736px;height:79px;border-radius:39.5px;background:#3b78f2"></div>
<div class="t " style="left:2880.7px;top:1773.95px;font-size:29px;font-weight:400;color:#fff;letter-spacing:0.251px;-webkit-text-stroke:0.85px currentColor;">Review Feature List</div>
<div class="r" style="left:3308px;top:1764px;width:48px;height:48px;border-radius:50%;background:#fff"></div>
<svg class="r" style="left:3315.0px;top:1771.0px;" width="34" height="34" viewBox="0 0 24 24" fill="none" stroke="#3b78f2" stroke-width="1.7" stroke-linecap="round" stroke-linejoin="round"><path d="M10 12a2 2 0 1 0 4 0a2 2 0 0 0 -4 0"/><path d="M21 12c-2.4 4 -5.4 6 -9 6c-3.6 0 -6.6 -2 -9 -6c2.4 -4 5.4 -6 9 -6c3.6 0 6.6 2 9 6"/></svg>
<div class="r" style="left:2640px;top:1860px;width:736px;height:2px;background:#d5d9de"></div>
<svg class="r" style="left:2638px;top:1892px" width="56" height="64" viewBox="0 0 56 64">
<path d="M4 14 h48 a3 3 0 0 1 3 3 v38 a3 3 0 0 1 -3 3 h-17 l-7 6 l-7 -6 h-17 a3 3 0 0 1 -3 -3 v-38 a3 3 0 0 1 3 -3z" fill="#e6e8ee" stroke="#3d78e0" stroke-width="2"/>
<circle cx="28" cy="20" r="14" fill="#f2c14e" stroke="#3d78e0" stroke-width="1.8"/>
<rect x="22" y="30" width="12" height="12" fill="#f2c14e" stroke="#3d78e0" stroke-width="1.8"/>
<rect x="22" y="40" width="12" height="7" fill="#3d78e0"/>
<path d="M10 6 l5 4 M46 6 l-5 4 M7 31 l5 -4 M49 31 l-5 -4 M7 40 l5 4 M49 40 l-5 4" stroke="#3d78e0" stroke-width="2" stroke-linecap="round"/>
<path d="M13 10 l0 0" /><circle cx="25" cy="33" r="1" fill="#3d78e0"/><circle cx="28" cy="33" r="1" fill="#3d78e0"/><circle cx="31" cy="33" r="1" fill="#3d78e0"/>
</svg>
<div class="t " style="left:2712.7px;top:1909.29px;font-size:28px;font-weight:400;color:#0b1633;letter-spacing:1.289px;-webkit-text-stroke:0.85px currentColor;">Suggestions</div>
<div class="t " style="left:2640px;top:1995.99px;font-size:26px;font-weight:400;color:#0b1633;letter-spacing:-0.072px;-webkit-text-stroke:0.5px currentColor;">Additional signal is available from</div>
<div class="t " style="left:3031.7px;top:1995.99px;font-size:26px;font-weight:400;color:#3b78f2;letter-spacing:-1.059px;-webkit-text-stroke:0.5px currentColor;">1 theme</div>
<svg class="r" style="left:3122.5px;top:1994px;" width="34" height="34" viewBox="0 0 24 24" fill="none" stroke="#3b78f2" stroke-width="1.6" stroke-linecap="round" stroke-linejoin="round"><path d="M5.5 5h13a1 1 0 0 1 .5 1.5l-5 5.5l0 7l-4 -3l0 -4l-5 -5.5a1 1 0 0 1 .5 -1.5"/></svg>
<div class="t " style="left:3172px;top:1995.99px;font-size:26px;font-weight:700;color:#0b1633;letter-spacing:0.000px;">.</div>
<div class="r" style="left:3328px;top:2016px;width:100px;height:100px;border-radius:50%;background:#3b78f2;box-shadow:0 3px 8px rgba(0,0,0,0.2);z-index:9"></div>
<div class="t " style="left:3378px;transform:translateX(-50%);top:2040.58px;font-size:56px;font-weight:700;color:#fff;letter-spacing:0.000px;z-index:10">?</div>
<div class="r" style="left:2536px;top:28px;width:880px;height:140px;border-radius:20px;background:#fff;box-shadow:0 10px 40px rgba(0,0,0,0.12);z-index:20"></div>
<div class="r" style="left:2544px;top:44px;width:12px;height:108px;border-radius:6px;background:#3b78f2;z-index:21"></div>
<div class="t " style="left:2580.5px;top:52.18px;font-size:24px;font-weight:400;color:#1f2329;letter-spacing:0.933px;-webkit-text-stroke:0.5px currentColor;z-index:21">Success</div>
<div class="t " style="left:2580.5px;top:87.68px;font-size:24px;font-weight:400;color:#8a9199;letter-spacing:0.494px;-webkit-text-stroke:1px currentColor;z-index:21">CLIENT_BureauReportedCredit_CREDIT_TYPE_with_Lowest_s...</div>
<div class="t " style="left:2580.5px;top:119.68px;font-size:24px;font-weight:400;color:#8a9199;letter-spacing:0.778px;-webkit-text-stroke:0.5px currentColor;z-index:21">has been added to the feature list builder.</div>
<svg class="r" style="left:3359.0px;top:83.0px;z-index:21" width="30" height="30" viewBox="0 0 24 24" fill="none" stroke="#6b7078" stroke-width="1.6" stroke-linecap="round" stroke-linejoin="round"><path d="M18 6l-12 12"/><path d="M6 6l12 12"/></svg>
<div class="r" style="left:2947px;top:22px;width:67px;height:40px;border-radius:14px;background:#b0271f"></div>
<div class="r" style="left:3047px;top:24px;width:46px;height:46px;border-radius:50%;background:#c9ccd1"></div>
<svg class="r" style="left:33.0px;top:365.0px;z-index:6" width="42" height="42" viewBox="0 0 24 24" fill="none" stroke="#474e57" stroke-width="1.6" stroke-linecap="round" stroke-linejoin="round"><path d="M6 21l6 -5l6 5"/><path d="M12 13v8"/><path d="M3.294 13.678l.166 .281c.52 .88 1.624 1.265 2.605 .91l14.242 -5.165a1.023 1.023 0 0 0 .565 -1.456l-2.62 -4.705a1.087 1.087 0 0 0 -1.447 -.42l-.056 .032l-12.694 7.618c-1.02 .613 -1.357 1.897 -.76 2.905z"/><path d="M14 5l3 5.5"/></svg>
<svg class="r" style="left:35px;top:518px;z-index:6" width="38" height="40" viewBox="0 0 38 40" fill="none" stroke="#474e57" stroke-width="1.6" stroke-linejoin="round">
<path d="M15 1.5 c9 -1 17 4 18 11 c0.3 2 -0.2 3 0.5 4.5 l3 4.5 c0.5 0.8 0 1.5 -1 1.6 l-1.8 0.2 v5.5 c0 2 -1.4 3 -3.2 3 h-3.5 v6.7 h-15 v-9 c-2.5 -2 -4.2 -4.5 -5.2 -7.5"/>
<path d="M12.5 5.5 l1.8 -0.2 l0.9 2.8 l2.3 1 l2.6 -1.4 l1.3 1.3 l-1.4 2.6 l1 2.3 l2.8 0.9 v1.9 l-2.8 0.9 l-1 2.3 l1.4 2.6 l-1.3 1.3 l-2.6 -1.4 l-2.3 1 l-0.9 2.8 h-1.9 l-0.9 -2.8 l-2.3 -1 l-2.6 1.4 l-1.3 -1.3 l1.4 -2.6 l-1 -2.3 l-2.8 -0.9 v-1.9 l2.8 -0.9 l1 -2.3 l-1.4 -2.6 l1.3 -1.3 l2.6 1.4 l2.3 -1 l0.9 -2.8z"/>
<circle cx="13.4" cy="14.8" r="4"/>
</svg>
<svg class="r" style="left:30.6px;top:667.0px;z-index:6" width="46" height="46" viewBox="0 0 24 24" fill="none" stroke="#474e57" stroke-width="1.6" stroke-linecap="round" stroke-linejoin="round"><path d="M3 12h1m8 -9v1m8 8h1m-15.4 -6.4l.7 .7m12.1 -.7l-.7 .7"/><path d="M9 16a5 5 0 1 1 6 0a3.5 3.5 0 0 0 -1 3a2 2 0 0 1 -4 0a3.5 3.5 0 0 0 -1 -3"/><path d="M9.7 17l4.6 0"/></svg>
<div class="r" style="left:0px;top:770.4px;width:116px;height:151px;background:#e8f3fd;z-index:6"></div>
<div class="r" style="left:108px;top:770.4px;width:8px;height:151px;background:#2f66d8;z-index:6"></div>
<svg class="r" style="left:28.0px;top:820.5px;z-index:7" width="44" height="44" viewBox="0 0 24 24" fill="none" stroke="#474e57" stroke-width="1.7" stroke-linecap="round" stroke-linejoin="round"><path d="M9 3l6 0"/><path d="M10 9l4 0"/><path d="M10 3v6l-4 11a.7 .7 0 0 0 .5 1h11a.7 .7 0 0 0 .5 -1l-4 -11v-6"/></svg>
<svg class="r" style="left:33.3px;top:972.6px;z-index:6" width="42" height="42" viewBox="0 0 24 24" fill="none" stroke="#474e57" stroke-width="1.7" stroke-linecap="round" stroke-linejoin="round"><path d="M5 12l5 5l10 -10"/></svg>
<svg class="r" style="left:31.6px;top:1123.4px;z-index:6" width="44" height="44" viewBox="0 0 24 24" fill="none" stroke="#474e57" stroke-width="1.7" stroke-linecap="round" stroke-linejoin="round"><path d="M3 12h4l3 -7l4 14l3 -7h4"/></svg>
<div class="r" style="left:0px;top:1850px;width:116px;height:2px;background:#d5d9de;z-index:6"></div>
<svg class="r" style="left:33.0px;top:1903.0px;z-index:6" width="44" height="44" viewBox="0 0 24 24" fill="none" stroke="#474e57" stroke-width="1.6" stroke-linecap="round" stroke-linejoin="round"><path d="M11.46 20.846a12 12 0 0 1 -7.96 -14.846a12 12 0 0 0 8.5 -3a12 12 0 0 0 8.5 3a12 12 0 0 1 -.09 7.06"/><path d="M15 19l2 2l4 -4"/></svg>
<svg class="r" style="left:34.8px;top:2056.0px;z-index:6" width="44" height="44" viewBox="0 0 24 24" fill="none" stroke="#474e57" stroke-width="1.6" stroke-linecap="round" stroke-linejoin="round"><path d="M8 7a4 4 0 1 0 8 0a4 4 0 0 0 -8 0"/><path d="M6 21v-2a4 4 0 0 1 4 -4h1.5"/><path d="M18 18m-3 0a3 3 0 1 0 6 0a3 3 0 1 0 -6 0"/><path d="M20.2 20.2l1.8 1.8"/></svg>
</body></html>
